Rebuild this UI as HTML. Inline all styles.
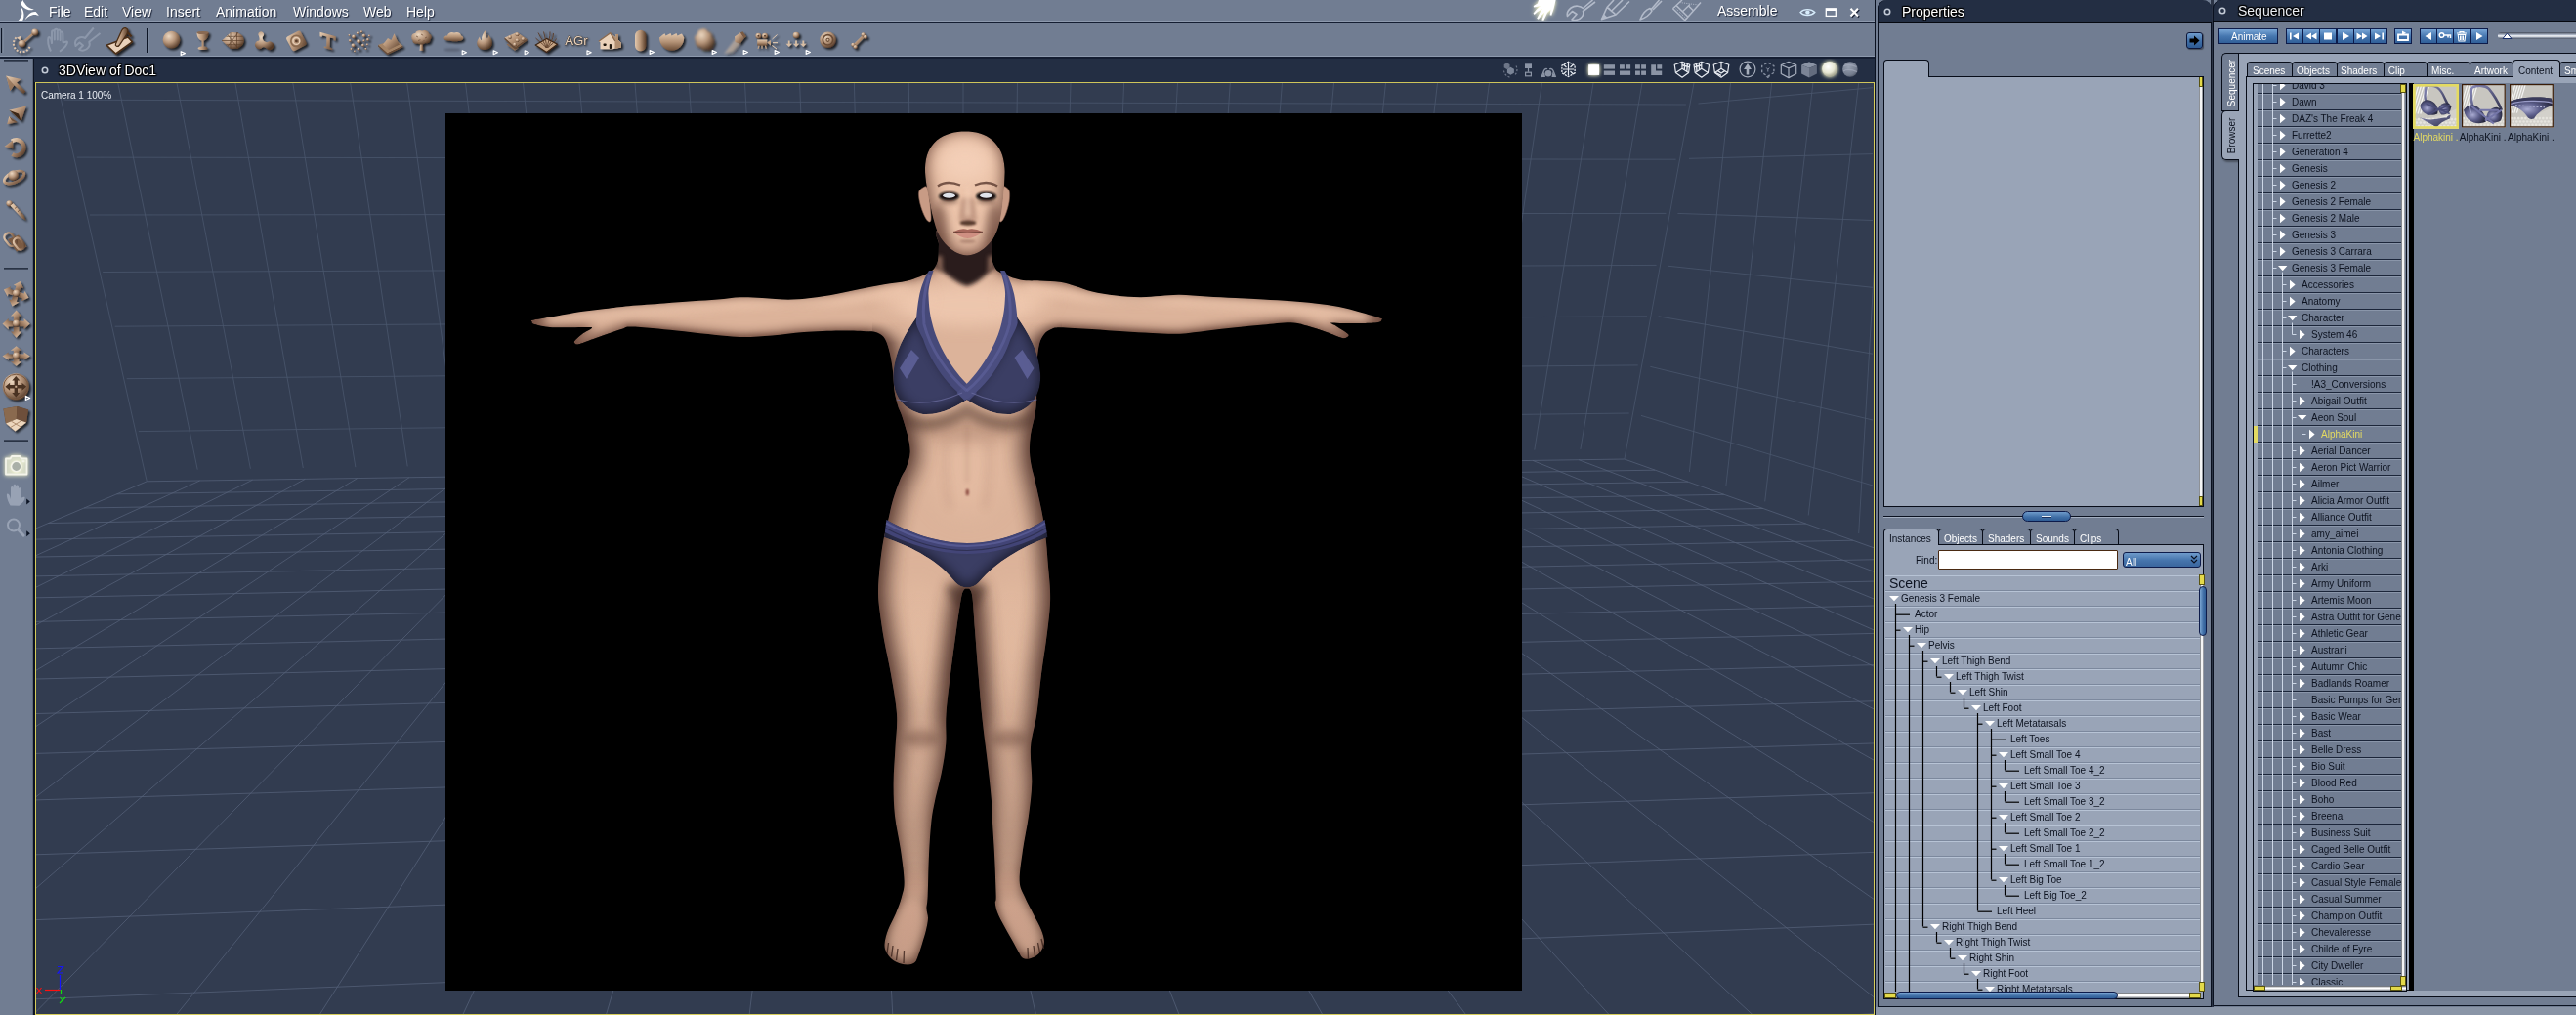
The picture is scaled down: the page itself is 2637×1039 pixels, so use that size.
<!DOCTYPE html><html><head><meta charset="utf-8"><title>Carrara</title><style>
*{box-sizing:border-box;margin:0;padding:0}
html,body{width:2637px;height:1039px;overflow:hidden;background:#717d92;font-family:"Liberation Sans",sans-serif;}
#root{will-change:transform;position:relative;width:2637px;height:1039px;overflow:hidden;background:#717d92}
.abs{position:absolute}
.t{position:absolute;white-space:nowrap;line-height:1}
.menu{font-size:14px;color:#fff;text-shadow:1px 1px 1px #1a2236}
.title{font-size:14px;color:#fff;text-shadow:0 0 2px #000,1px 1px 1px #000,-1px -1px 1px #000,1px -1px 1px #000,-1px 1px 1px #000}
.tr{font-size:10px;color:#0d1320}
.tab{position:absolute;font-size:10px;color:#fff;white-space:nowrap;line-height:1}
</style></head><body><div id="root"><div class="abs" style="left:1919px;top:1031px;width:718px;height:8px;background:#8a95a7"></div><div class="abs" style="left:2263px;top:0;width:3px;height:1031px;background:#2b3446"></div><div class="abs" style="left:0;top:22px;width:1919px;height:1px;background:#8d99ad"></div><div class="abs" style="left:0;top:23px;width:1919px;height:1px;background:#141d31"></div><div class="t menu" style="left:50px;top:5px">File</div><div class="t menu" style="left:86px;top:5px">Edit</div><div class="t menu" style="left:125px;top:5px">View</div><div class="t menu" style="left:170px;top:5px">Insert</div><div class="t menu" style="left:221px;top:5px">Animation</div><div class="t menu" style="left:300px;top:5px">Windows</div><div class="t menu" style="left:372px;top:5px">Web</div><div class="t menu" style="left:416px;top:5px">Help</div><div class="abs" style="left:0;top:57px;width:1919px;height:1px;background:#8d99ad"></div><div class="abs" style="left:0;top:58px;width:1919px;height:2px;background:#141d31"></div><div class="t menu" style="left:1758px;top:4px;font-size:14px">Assemble</div><svg class="abs" style="left:0;top:24px" width="920" height="34" viewBox="0 24 920 34"><defs>
<linearGradient id="bz" x1="0" y1="0" x2="1" y2="1"><stop offset="0" stop-color="#e6ceb4"/><stop offset=".45" stop-color="#b59377"/><stop offset="1" stop-color="#5a3f2c"/></linearGradient>
<linearGradient id="bzv" x1="0" y1="0" x2="0" y2="1"><stop offset="0" stop-color="#e2c8ae"/><stop offset=".5" stop-color="#b39276"/><stop offset="1" stop-color="#6a4c36"/></linearGradient>
<linearGradient id="bzh" x1="0" y1="0" x2="1" y2="0"><stop offset="0" stop-color="#e2c8ae"/><stop offset=".45" stop-color="#b99779"/><stop offset="1" stop-color="#553a28"/></linearGradient>
<radialGradient id="bzr" cx=".35" cy=".3" r=".75"><stop offset="0" stop-color="#ecd8c2"/><stop offset=".5" stop-color="#b6957a"/><stop offset="1" stop-color="#523826"/></radialGradient>
<filter id="ds" x="-30%" y="-30%" width="170%" height="170%"><feGaussianBlur in="SourceAlpha" stdDeviation="1"/><feOffset dx="1.6" dy="1.8"/><feComponentTransfer><feFuncA type="linear" slope=".75"/></feComponentTransfer><feMerge><feMergeNode/><feMergeNode in="SourceGraphic"/></feMerge></filter>
<filter id="sb" x="-50%" y="-50%" width="200%" height="200%"><feGaussianBlur stdDeviation="0.8"/></filter>
</defs><rect x="1" y="29" width="1.4" height="25" fill="#0c1424"/><rect x="2.4" y="29" width="1" height="25" fill="#8b96aa"/><rect x="150" y="29" width="1.4" height="25" fill="#0c1424"/><rect x="151.4" y="29" width="1" height="25" fill="#8b96aa"/><g filter="url(#ds)"><path d="M22.5 44.6L35.7 32.9" stroke="url(#bz)" stroke-width="2.6" stroke-linecap="round"/><circle cx="22.5" cy="44.6" r="3.7" fill="url(#bzr)"/><circle cx="35.7" cy="32.9" r="3.4" fill="url(#bzr)"/><rect x="15.0" y="38.2" width="1.9" height="1.9" fill="#e2c6aa" transform="rotate(-140 15.9 39.1)"/><rect x="13.3" y="41.3" width="1.9" height="1.9" fill="#e2c6aa" transform="rotate(-164 14.2 42.2)"/><rect x="13.1" y="44.9" width="1.9" height="1.9" fill="#e2c6aa" transform="rotate(-188 14.0 45.8)"/><rect x="14.3" y="48.3" width="1.9" height="1.9" fill="#e2c6aa" transform="rotate(-212 15.2 49.2)"/><rect x="16.8" y="50.8" width="1.9" height="1.9" fill="#e2c6aa" transform="rotate(-236 17.7 51.7)"/><rect x="20.1" y="52.2" width="1.9" height="1.9" fill="#e2c6aa" transform="rotate(-260 21.0 53.1)"/><rect x="23.7" y="52.0" width="1.9" height="1.9" fill="#e2c6aa" transform="rotate(-284 24.6 52.9)"/><rect x="26.9" y="50.5" width="1.9" height="1.9" fill="#e2c6aa" transform="rotate(-308 27.8 51.4)"/><rect x="29.2" y="47.7" width="1.9" height="1.9" fill="#e2c6aa" transform="rotate(-332 30.1 48.6)"/><path d="M17 38.5l4.5-1.8l-1 4.6z" fill="#e2c6aa"/><path d="M109 46.2L131 38L135.3 42.8L118.6 55Z" fill="#ead2ba" stroke="#4a2e18" stroke-width="1.6" stroke-linejoin="round"/><path d="M128.5 28.6C131.5 29.4 131.6 32.5 129.5 35.5L122 46.5C120.5 48.3 117.6 47.2 118.5 44.8L124 32.5C125 30 126.8 28.3 128.5 28.6Z" fill="url(#bzh)" stroke="#4a2e18" stroke-width="1.3"/><path d="M131 33.5L134.5 37.5" stroke="#4a2e18" stroke-width="2.2"/><circle cx="175.5" cy="40.7" r="8.9" fill="url(#bzr)"/><path d="M201.5 33.5C201.5 38 204 41 206.6 41.6L206.6 47.6C204 47.8 202.6 48.6 202.6 49.5C202.6 50.6 205 51 207.6 51C210.2 51 212.6 50.6 212.6 49.5C212.6 48.6 211.2 47.8 208.6 47.6L208.6 41.6C211.2 41 213.7 38 213.7 33.5Z" fill="url(#bzh)"/><ellipse cx="207.6" cy="33.5" rx="6.1" ry="1.6" fill="#8a6a52"/><path d="M227 41.5L236 33.2C243 32 249.8 35.5 249.8 41.5C249.8 47.5 243 51 236 49.8Z" fill="url(#bzr)"/><path d="M227 41.5H249.8M231.5 37.3H248.5M231.5 45.7H248.5M236 33.2V49.8M242.5 33V50M233 35.5L244 50M233 47.5L244 33" stroke="#5a3e2a" stroke-width=".8" fill="none" opacity=".85"/><path d="M264.3 35.2a2.9 2.9 0 1 1 4.6 2.4C268 40 270 43 273.5 43.2a4.3 4.3 0 1 1 -0.6 6.6C271 48.5 270 48 268.8 48.6a4.4 4.4 0 1 1 -3.6 -7.2C266 40 265.5 38 264.3 35.2Z" fill="url(#bzr)"/><g transform="rotate(-28 303.4 41.9)"><rect x="295.2" y="33.7" width="16.4" height="16.4" rx="2.5" fill="url(#bz)"/></g><circle cx="303.4" cy="41.9" r="5.6" fill="none" stroke="#8a6a50" stroke-width="1.6"/><circle cx="303.4" cy="41.9" r="3.4" fill="none" stroke="#e6cdb4" stroke-width="1.5"/><circle cx="303.4" cy="41.9" r="1.4" fill="#5a3e2a"/><path d="M327.5 32.8L343.8 37.2L343.6 41.5L341.8 41.3L341.4 39.3L337.8 38.4L337.6 48.6L340.2 49.6L340.2 51.2L331.8 49L331.8 47.4L334.2 47.8L334.4 37.4L330 36.2L329.4 37.8L327.5 37.3Z" fill="url(#bz)"/><circle cx="367.2" cy="42.3" r="2.1" fill="url(#bzr)"/><circle cx="362" cy="37.5" r="1.9" fill="url(#bzr)"/><circle cx="372.5" cy="36.5" r="1.8" fill="url(#bzr)"/><circle cx="361.5" cy="46.5" r="1.9" fill="url(#bzr)"/><circle cx="371.5" cy="46.2" r="1.5" fill="url(#bzr)"/><circle cx="366" cy="33.8" r="1.3" fill="url(#bzr)"/><circle cx="376.5" cy="40.5" r="1.4" fill="url(#bzr)"/><circle cx="358.3" cy="41.5" r="1.4" fill="url(#bzr)"/><circle cx="367" cy="50.2" r="1.4" fill="url(#bzr)"/><circle cx="374.5" cy="50" r="1.1" fill="url(#bzr)"/><circle cx="359.5" cy="50.2" r="1.1" fill="url(#bzr)"/><circle cx="370" cy="32.5" r="1.2" fill="url(#bzr)"/><circle cx="376" cy="45.5" r="1.1" fill="url(#bzr)"/><circle cx="363" cy="52.5" r="1" fill="url(#bzr)"/><circle cx="378" cy="36.5" r="1.1" fill="url(#bzr)"/><circle cx="357.5" cy="36" r="1.1" fill="url(#bzr)"/><circle cx="372.5" cy="41.5" r="1.2" fill="url(#bzr)"/><path d="M387 46L404 40L412.3 47L396.5 54.4Z" fill="#a58466"/><path d="M392 45.5L397 39L400.5 41L403.5 34.3L406 40L409 45.5L398 51Z" fill="url(#bz)"/><path d="M387 46L396.5 54.4L412.3 47L412.3 48.5L396.5 56L387 47.5Z" fill="#6a4c36"/><path d="M430.2 44H432.8L433.3 51.7H429.6Z" fill="url(#bzh)"/><path d="M421.5 38.5C420.5 35 424 33.8 425.2 34C426 31 430 30.6 432 31.6C435 30 439 32 439.2 34.6C442 35.5 442.5 39 440.5 40.6C441 43.5 437.5 45 435.5 44C433.5 46 429.5 46 427.8 44.5C425 45.6 421.8 43.5 422.5 41C421.2 40.3 421 39.3 421.5 38.5Z" fill="url(#bzr)"/><path d="M426 37l2 1M431 35l2.2 1.2M435 39l2-1M428 41.5l2.4-.8M433 42.5l1.5-1.5" stroke="#6e4f3a" stroke-width=".9" opacity=".8"/><path d="M455 40.5C453.5 38 456 36 458 36.5C458.5 33.5 462.5 32 465 33.6C468 31.8 472 33.8 472 36.5C474.5 37 475 40 473 41C472 42.6 458 42.8 455 40.5Z" fill="url(#bzv)"/><path d="M496.5 31.2C499.5 35 497 37.5 499 39.5C500 38 500.2 36.8 499.8 35.5C503 38.5 504.5 42.5 503.5 46C502.5 49.5 499 51 496 51C492 51 488.5 48.5 488.2 44.5C488 41.5 489.8 39.5 491 37.5C491.2 39.5 491.8 40.5 493 41.3C492.6 37.5 494.5 34 496.5 31.2Z" fill="url(#bzr)"/><path d="M516.5 38.5L529 33L539.5 40L527.5 48.5Z" fill="url(#bz)"/><path d="M516.5 38.5L527.5 48.5L539.5 40V41.6L527.5 50.4L516.5 40.2Z" fill="#6a4c36"/><path d="M518.5 45.5L527 51.8L531 49L527.5 50.4L520 44.5Z" fill="#8a6a50"/><circle cx="522" cy="38" r="1.9" fill="url(#bzr)"/><circle cx="529.5" cy="35.2" r="1.9" fill="url(#bzr)"/><circle cx="535.5" cy="39.8" r="1.9" fill="url(#bzr)"/><circle cx="529.5" cy="41.2" r="1.9" fill="url(#bzr)"/><circle cx="527" cy="45.5" r="1.9" fill="url(#bzr)"/><path d="M548.2 46L559.5 39.4L570.6 45.2L559.5 53.4Z" fill="#c4a384" stroke="#3a2414" stroke-width="1.2" stroke-linejoin="round"/><path d="M559 49C558 44 554 40 551 33.5M559.5 49C559.5 43 557.5 37 556.5 32.5M560 49C561 43 563.5 38 563 32.5M560.5 49C562.5 44.5 566.5 40 566.5 34M559 48.5C556 45 552 42.5 548.5 39M561 48.5C564 45.5 568 43.5 569.5 39.5" stroke="#5a3c28" stroke-width=".9" fill="none"/><path d="M612.8 42.2L624.8 33.8L630.5 38.5L630.5 35L633 35L633 41L635.8 43.8L635.8 48.5L627 50.3L614.5 50.3L614.5 43.2Z" fill="#ead2ba"/><path d="M624.8 33.8L630.5 38.5V35H633V41L635.8 43.8V48.5L629.5 50L629.5 42Z" fill="#b08e70"/><path d="M612.8 42.2L624.8 33.8L629.8 42" stroke="#8a6a50" stroke-width="1.3" fill="none"/><rect x="617.5" y="44.5" width="3.2" height="2.4" rx=".8" fill="#1c120a"/><rect x="623.8" y="45" width="2.2" height="5" rx=".8" fill="#1c120a"/><rect x="650" y="30.8" width="11.4" height="21.5" rx="5.7" fill="url(#bzh)"/><path d="M675 38.5L678.5 35.5L680.5 34.2L681.5 36.6L684.5 35L686.5 34L687.5 36.6L690.5 35L692.5 34L693.5 36.6L696.5 35L698 34.5L700.2 38.5C700.2 46 694.5 51.8 687.6 51.8C680.7 51.8 675 46 675 38.5Z" fill="url(#bzv)"/><path d="M719 29.5C722 28.8 724 30.5 724.5 32.5C727.5 32.5 729.5 35.5 728.5 38C731.5 40 732 44.5 729.5 46.5C729.5 50 725.5 52.2 722.5 50.5C720.5 51.5 718 50.5 717.5 48.2C713.5 48.5 711 45 712.5 42C710.3 40 710.8 36 713.8 35C713.5 32 716 29.8 719 29.5Z" fill="url(#bzr)" filter="url(#sb)"/><path d="M752.5 40L741 55L750 53L757.5 44.5Z" fill="#d8bea4" opacity=".55" filter="url(#sb)"/><path d="M752 37.5L757.8 33.3L762 39L757.8 44.5L752.5 43Z" fill="url(#bz)"/><path d="M757.8 33.3L760.5 32.3L764 37.5L762 39Z" fill="#7a5a42"/><circle cx="776.4" cy="36.8" r="3" fill="url(#bzr)"/><circle cx="783" cy="36.8" r="3" fill="url(#bzr)"/><circle cx="776.4" cy="36.8" r="1" fill="#5a3e2a"/><circle cx="783" cy="36.8" r="1" fill="#5a3e2a"/><rect x="775.2" y="40.6" width="10" height="6" fill="url(#bzv)"/><path d="M785.2 43.6L789 41V46.4Z" fill="#c4a384"/><path d="M777 46.6L776 49.8M780 46.6V49.8M783.4 46.6L784.4 49.8" stroke="#c4a384" stroke-width="1.1"/><path d="M790.5 40L795.5 35.5M791 43.6H796M790.5 46.6L795 50" stroke="#e2c8ae" stroke-width="1"/><circle cx="815" cy="36" r="3.3" fill="url(#bzr)"/><path d="M806.8000000000001 41.5h1.8v3.2h2.2l-3.1 3.4l-3.1-3.4h2.2z" fill="#d8bea4"/><path d="M814.1 41.5h1.8v3.2h2.2l-3.1 3.4l-3.1-3.4h2.2z" fill="#d8bea4"/><path d="M821.4 41.5h1.8v3.2h2.2l-3.1 3.4l-3.1-3.4h2.2z" fill="#d8bea4"/><circle cx="847.5" cy="40.8" r="8.3" fill="url(#bzr)"/><circle cx="847.5" cy="40.8" r="5.2" fill="none" stroke="#6a4c36" stroke-width="1.7"/><circle cx="847.5" cy="40.8" r="2.1" fill="#6a4c36"/><circle cx="847.5" cy="40.8" r="1" fill="#d8bea4"/><path d="M875 46.2L884 37" stroke="url(#bz)" stroke-width="3.2"/><circle cx="873.3" cy="45.8" r="2.1" fill="url(#bzr)"/><circle cx="875.6" cy="48" r="2.1" fill="url(#bzr)"/><circle cx="883.6" cy="35.4" r="2.1" fill="url(#bzr)"/><circle cx="885.9" cy="37.8" r="2.1" fill="url(#bzr)"/></g><ellipse cx="463" cy="51" rx="8.5" ry="1.6" fill="#4a4f5e" opacity=".6" filter="url(#sb)"/><path d="M52 52.5C49.5 47 48.5 42 49.5 38.5C50.5 37.5 52 38.5 52.5 41L53 44V33C53 30.8 55.8 30.8 55.8 33V40.5V31.5C55.8 29.3 58.8 29.3 58.8 31.5V40.5V32C58.8 30 61.6 30 61.6 32V41V34C61.6 32 64.3 32 64.3 34L64.5 43C66.5 44 68.5 41.5 69 43C69 46.5 65.5 49.5 61 52.7" fill="none" stroke="#8c97aa" stroke-width="2" stroke-linejoin="round"/><path d="M95.8 28.5L87 39C84 37 79.5 38 77.5 41.5C76.5 43.5 76.8 45.5 77.5 47L81.5 43.5L85 46.5L81 50.5C83.5 52.5 88 52 90.5 48.5C92 46.5 92 44.5 91.3 42.8L102.5 34" fill="none" stroke="#8c97aa" stroke-width="2" stroke-linejoin="round"/><text x="578.3" y="45.6" font-family="Liberation Sans, sans-serif" font-size="13.2" fill="#e9d2ba" stroke="#3a2616" stroke-width=".5" paint-order="stroke" style="filter:drop-shadow(1.2px 1.4px 1px rgba(0,0,0,.7))">AGr</text><path d="M185.2 52.699999999999996l4.2 1.9l-4.2 1.9z" fill="#71798c" stroke="#fff" stroke-width="1.2" stroke-linejoin="round"/><path d="M473.2 51.9l4.2 1.9l-4.2 1.9z" fill="#71798c" stroke="#fff" stroke-width="1.2" stroke-linejoin="round"/><path d="M505.2 51.9l4.2 1.9l-4.2 1.9z" fill="#71798c" stroke="#fff" stroke-width="1.2" stroke-linejoin="round"/><path d="M537.2 51.9l4.2 1.9l-4.2 1.9z" fill="#71798c" stroke="#fff" stroke-width="1.2" stroke-linejoin="round"/><path d="M601 51.9l4.2 1.9l-4.2 1.9z" fill="#71798c" stroke="#fff" stroke-width="1.2" stroke-linejoin="round"/><path d="M665.2 51.6l4.2 1.9l-4.2 1.9z" fill="#71798c" stroke="#fff" stroke-width="1.2" stroke-linejoin="round"/><path d="M729.2 51.6l4.2 1.9l-4.2 1.9z" fill="#71798c" stroke="#fff" stroke-width="1.2" stroke-linejoin="round"/><path d="M761.2 51.6l4.2 1.9l-4.2 1.9z" fill="#71798c" stroke="#fff" stroke-width="1.2" stroke-linejoin="round"/><path d="M793.2 51.6l4.2 1.9l-4.2 1.9z" fill="#71798c" stroke="#fff" stroke-width="1.2" stroke-linejoin="round"/><path d="M825.2 51.6l4.2 1.9l-4.2 1.9z" fill="#71798c" stroke="#fff" stroke-width="1.2" stroke-linejoin="round"/></svg><div class="abs" style="left:33px;top:60px;width:1px;height:979px;background:#5b6679"></div><div class="abs" style="left:34px;top:60px;width:2px;height:979px;background:#0c1322"></div><div class="abs" style="left:35px;top:60px;width:1884px;height:24px;background:#232e43"></div><div class="t title" style="left:60px;top:65px">3DView of Doc1</div><div class="abs" style="left:36px;top:84px;width:1883px;height:955px;background:#323c50;border:1px solid #d6cc5a;border-top-color:#cfc55a"></div><div id="vp" class="abs" style="left:37px;top:85px;width:1881px;height:953px;overflow:hidden"><svg width="1881" height="953" viewBox="37 85 1881 953" style="position:absolute;left:0;top:0" fill="none" stroke-width="1"><path d="M150.3 492.8L-4307.7 2380.8M204.6 492.0L-3839.7 2339.6M258.6 491.2L-3389.0 2299.9M312.3 490.4L-2954.6 2261.6M365.8 489.6L-2535.6 2224.7M418.9 488.8L-2131.3 2189.1M471.8 488.0L-1740.8 2154.7M524.4 487.2L-1363.5 2121.5M576.8 486.4L-998.7 2089.4M628.8 485.6L-645.8 2058.3M680.6 484.8L-304.2 2028.2M732.1 484.0L26.6 1999.1M783.4 483.3L347.1 1970.9M834.4 482.5L657.7 1943.5M885.1 481.7L959.0 1917.0M935.6 481.0L1251.4 1891.2M985.8 480.2L1535.1 1866.2M1035.8 479.5L1810.7 1842.0M1085.5 478.7L2078.5 1818.4M1134.9 478.0L2338.7 1795.5M1184.2 477.2L2591.7 1773.2M1233.1 476.5L2837.9 1751.5M1281.8 475.8L3077.4 1730.4M1330.3 475.0L3310.5 1709.9M1378.5 474.3L3537.6 1689.9M1426.5 473.6L3758.7 1670.4M1474.3 472.9L3974.2 1651.4M1521.8 472.1L4184.3 1632.9M1569.0 471.4L4389.2 1614.9M1616.1 470.7L4589.0 1597.3M1662.9 470.0L4783.9 1580.1M150.3 492.8L1662.9 470.0M119.5 505.8L1694.2 481.2M86.0 520.0L1728.1 493.2M49.4 535.5L1764.8 506.3M9.1 552.6L1804.9 520.5M-35.3 571.4L1848.7 536.1M-84.5 592.2L1896.9 553.2M-139.4 615.5L1950.0 572.1M-201.0 641.6L2008.9 593.1M-270.6 671.0L2074.6 616.4M-349.8 704.6L2148.3 642.7M-440.9 743.2L2231.7 672.3M-546.7 788.0L2326.6 706.1M-671.1 840.7L2435.9 745.0M-819.4 903.5L2562.8 790.1M-999.4 979.7L2712.2 843.2M-1222.2 1074.0L2890.4 906.6M-1505.2 1193.9L3106.8 983.6M-1876.9 1351.4L3375.2 1079.1M-2386.6 1567.2L3716.7 1200.5M-3128.3 1881.3L4166.1 1360.4M-4307.7 2380.8L4783.9 1580.1" stroke="#55617a" opacity=".75"/><path d="M58.7 85L150.3 492.8M120.8 85L202.2 480.6M181.0 85L256.4 479.8M240.9 85L310.3 479.0M299.8 85L363.9 478.2M358.7 85L417.2 477.4M416.7 85L470.3 476.7M476.5 85L523.1 475.9M535.5 85L575.6 475.1M593.0 85L627.8 474.4M650.0 85L679.8 473.6M705.3 85L731.4 472.9M762.5 85L782.8 472.1M818.6 85L833.9 471.4M874.4 85L884.8 470.6M930.3 85L935.4 469.9M986.0 85L985.8 469.2M1041.5 85L1035.9 468.4M1096.0 85L1085.8 467.7M1150.6 85L1135.4 467.0M1205.5 85L1184.7 466.2M1259.3 85L1233.8 465.5M1312.5 85L1282.7 464.8M1365.5 85L1331.3 464.1M1418.5 85L1379.6 463.4M1471.5 85L1427.8 462.7M1524.5 85L1475.7 462.0M1578.5 85L1523.4 461.3M1631.0 85L1570.8 460.6M1681.0 85L1617.9 459.9M1734.0 85L1662.9 470.0M65.6 102.2L1725.9 107M78.8 161.1L1715.6 163.2M92.0 220L1705.4 218.4M105.2 278.5L1695.6 271.4M117.7 334.2L1686.0 323.8M129.7 387.7L1676.7 373.9M141.8 441.6L1667.7 423" stroke="#4a566d" opacity=".8"/><path d="M1771.6 85L1729.4 483M1813.7 85L1766.9 497M1855.9 85L1806.7 513.4M1902.7 85L1851.2 527.5M1920 249L1902.7 546M1738.5 106L1917 89.7M1729 162.3L1917 157.6M1717.4 218.4L1917 225.5M1708 272.3L1917 294.3M1697.7 323.8L1917 362.2M1689.3 375.3L1917 430M1680 425.4L1917 497" stroke="#4a566d" opacity=".8"/><path d="M61.5 998V1013.5" stroke="#1414ff" stroke-width="1.2"/><path d="M46 1013.5H61.5" stroke="#ff1010" stroke-width="1.2"/><path d="M62.5 1013V1018" stroke="#10e010" stroke-width="1.2"/><path d="M59 989.5H64.5L59 996H65" stroke="#1414ff" stroke-width="1.1"/><path d="M37.5 1011L42.5 1017M42.5 1011L37.5 1017" stroke="#ff1010" stroke-width="1.1"/><path d="M61.5 1021L64 1024L67 1021M64 1024L61 1027" stroke="#10e010" stroke-width="1.1"/></svg></div><div class="abs" style="left:456px;top:116px;width:1102px;height:898px;background:#000;overflow:hidden"><svg width="1102" height="898" viewBox="456 116 1102 898" style="position:absolute;left:0;top:0" fill="#c99c84"><defs><filter id="fBody" x="-2%" y="-2%" width="104%" height="104%" color-interpolation-filters="sRGB"><feMorphology in="SourceAlpha" operator="erode" radius="1" result="e"/><feGaussianBlur in="e" stdDeviation="6" result="b0"/><feOffset in="b0" dx="0" dy="-1.5" result="b"/><feFlood flood-color="#dcb39a"/><feComposite operator="in" in2="b" result="l"/><feFlood flood-color="#6a463a"/><feComposite operator="in" in2="SourceAlpha" result="d"/><feMerge result="m"><feMergeNode in="d"/><feMergeNode in="l"/></feMerge><feComposite in="m" in2="SourceAlpha" operator="in"/></filter><filter id="fHead" x="-2%" y="-2%" width="104%" height="104%" color-interpolation-filters="sRGB"><feMorphology in="SourceAlpha" operator="erode" radius="2" result="e"/><feGaussianBlur in="e" stdDeviation="8" result="b0"/><feOffset in="b0" dx="0" dy="-3" result="b"/><feFlood flood-color="#ecc4aa"/><feComposite operator="in" in2="b" result="l"/><feFlood flood-color="#7a5446"/><feComposite operator="in" in2="SourceAlpha" result="d"/><feMerge result="m"><feMergeNode in="d"/><feMergeNode in="l"/></feMerge><feComposite in="m" in2="SourceAlpha" operator="in"/></filter><filter id="fBik" x="-2%" y="-2%" width="104%" height="104%" color-interpolation-filters="sRGB"><feMorphology in="SourceAlpha" operator="erode" radius="2" result="e"/><feGaussianBlur in="e" stdDeviation="6" result="b0"/><feOffset in="b0" dx="0" dy="-1" result="b"/><feFlood flood-color="#3b3e64"/><feComposite operator="in" in2="b" result="l"/><feFlood flood-color="#1d1e31"/><feComposite operator="in" in2="SourceAlpha" result="d"/><feMerge result="m"><feMergeNode in="d"/><feMergeNode in="l"/></feMerge><feComposite in="m" in2="SourceAlpha" operator="in"/></filter><filter id="bl1" filterUnits="userSpaceOnUse" x="456" y="116" width="1102" height="898"><feGaussianBlur stdDeviation="0.8"/></filter><filter id="bl2" filterUnits="userSpaceOnUse" x="456" y="116" width="1102" height="898"><feGaussianBlur stdDeviation="2"/></filter><filter id="bl4" filterUnits="userSpaceOnUse" x="456" y="116" width="1102" height="898"><feGaussianBlur stdDeviation="4"/></filter><filter id="bl8" filterUnits="userSpaceOnUse" x="456" y="116" width="1102" height="898"><feGaussianBlur stdDeviation="8"/></filter><filter id="bl14" filterUnits="userSpaceOnUse" x="456" y="116" width="1102" height="898"><feGaussianBlur stdDeviation="14"/></filter><clipPath id="cBody"><path d="M962.0 234.0C953.2 236.7 961.2 245.0 961.0 250.0C960.8 255.0 961.0 260.3 960.5 264.0C960.0 267.7 959.6 269.5 958.0 272.0C956.4 274.5 955.8 276.4 951.0 279.0C946.2 281.6 936.7 285.5 929.0 287.5C921.3 289.5 913.2 289.8 905.0 291.2C896.8 292.6 888.2 294.4 880.0 296.0C871.8 297.6 864.3 299.5 856.0 301.0C847.7 302.5 838.2 304.1 830.0 305.0C821.8 305.9 815.3 306.7 807.0 306.7C798.7 306.7 788.2 305.4 780.0 305.0C771.8 304.6 765.5 303.9 758.0 304.2C750.5 304.4 743.2 305.8 735.0 306.5C726.8 307.2 718.2 307.6 709.0 308.3C699.8 309.0 690.8 309.7 680.0 310.5C669.2 311.3 654.0 312.3 644.0 313.2C634.0 314.1 628.2 315.0 620.0 316.0C611.8 317.0 603.3 317.8 595.0 319.0C586.7 320.2 578.1 322.1 570.0 323.5C561.9 324.9 550.5 326.5 546.3 327.5C542.0 328.5 544.4 328.8 544.5 329.5C544.6 330.2 543.9 331.1 547.0 332.0C550.1 332.9 556.7 334.5 563.0 335.0C569.3 335.5 578.8 335.2 585.0 335.2C591.2 335.2 596.5 334.9 600.0 335.0C603.5 335.1 606.7 334.6 606.0 335.8C605.3 337.0 599.0 339.8 596.0 342.0C593.0 344.2 589.4 347.3 588.2 349.0C587.0 350.7 588.1 351.5 589.0 352.0C589.9 352.5 590.1 353.0 593.6 352.0C597.1 351.0 602.9 348.5 610.0 346.0C617.1 343.5 630.3 338.9 636.0 337.0C641.7 335.1 638.7 334.6 644.0 334.4C649.3 334.2 659.8 335.3 668.0 336.0C676.2 336.7 683.5 337.5 693.0 338.5C702.5 339.5 714.2 340.9 725.0 342.0C735.8 343.1 747.2 344.8 758.0 345.0C768.8 345.2 779.2 344.3 790.0 343.5C800.8 342.7 811.3 340.8 823.0 340.0C834.7 339.2 849.0 338.6 860.0 338.5C871.0 338.4 882.5 338.9 889.0 339.3C895.5 339.7 896.2 339.7 899.0 341.0C901.8 342.3 904.0 343.5 906.0 347.0C908.0 350.5 909.7 356.5 911.0 362.0C912.3 367.5 913.2 373.7 914.0 380.0C914.8 386.3 914.7 394.2 915.5 400.0C916.3 405.8 917.8 410.8 919.0 415.0C920.2 419.2 921.3 420.0 923.0 425.0C924.7 430.0 927.5 438.7 929.0 445.0C930.5 451.3 931.9 457.5 931.7 463.0C931.5 468.5 929.7 473.3 928.0 478.0C926.3 482.7 923.7 485.3 921.4 491.0C919.1 496.7 916.0 505.2 914.0 512.0C912.0 518.8 911.0 524.8 909.3 532.0C907.6 539.2 905.4 547.0 904.0 555.0C902.6 563.0 901.5 571.7 900.7 580.0C899.9 588.3 899.0 597.5 899.0 605.0C899.0 612.5 899.5 616.7 900.5 625.0C901.5 633.3 903.1 644.2 905.0 655.0C906.9 665.8 909.8 677.3 912.0 690.0C914.2 702.7 917.2 718.5 918.0 731.0C918.8 743.5 917.1 753.3 916.5 765.0C915.9 776.7 914.7 789.3 914.6 801.0C914.5 812.7 914.8 823.5 916.0 835.0C917.2 846.5 920.4 858.8 922.0 870.0C923.6 881.2 925.4 894.0 925.6 902.0C925.8 910.0 924.4 912.5 923.0 918.0C921.6 923.5 919.3 929.3 917.0 935.0C914.7 940.7 910.9 946.8 909.0 952.0C907.1 957.2 905.8 962.3 905.5 966.0C905.2 969.7 905.8 971.3 907.0 974.0C908.2 976.7 910.5 979.9 913.0 982.0C915.5 984.1 919.2 985.6 922.0 986.5C924.8 987.4 927.5 987.8 930.0 987.5C932.5 987.2 935.0 986.6 936.7 985.0C938.4 983.4 938.8 981.2 940.0 978.0C941.2 974.8 942.7 970.3 944.0 966.0C945.3 961.7 947.0 956.3 948.0 952.0C949.0 947.7 949.9 943.7 950.0 940.0C950.1 936.3 948.5 933.8 948.5 930.0C948.5 926.2 949.3 926.2 949.7 917.0C950.1 907.8 950.4 887.5 951.0 875.0C951.6 862.5 952.3 851.2 953.3 842.0C954.3 832.8 955.2 828.7 957.0 820.0C958.8 811.3 962.1 799.8 964.0 790.0C965.9 780.2 967.5 770.8 968.3 761.0C969.0 751.2 967.7 742.8 968.5 731.0C969.3 719.2 971.2 704.3 973.0 690.0C974.8 675.7 977.2 658.0 979.0 645.0C980.8 632.0 982.7 618.9 984.0 612.0C985.3 605.1 986.0 605.1 987.0 603.5C988.0 601.9 989.0 602.5 990.0 602.5C991.0 602.5 992.1 601.9 993.0 603.5C993.9 605.1 994.7 605.1 995.5 612.0C996.3 618.9 997.0 632.0 998.0 645.0C999.0 658.0 1000.3 675.7 1001.5 690.0C1002.7 704.3 1003.8 719.2 1005.0 731.0C1006.2 742.8 1007.3 751.2 1008.5 761.0C1009.7 770.8 1010.9 780.2 1012.0 790.0C1013.1 799.8 1014.3 811.3 1015.0 820.0C1015.7 828.7 1015.5 832.8 1016.0 842.0C1016.5 851.2 1017.4 862.5 1018.0 875.0C1018.6 887.5 1019.5 908.8 1019.6 917.0C1019.7 925.2 1018.6 921.2 1018.8 924.0C1019.0 926.8 1019.5 930.0 1021.0 934.0C1022.5 938.0 1025.3 943.0 1028.0 948.0C1030.7 953.0 1034.5 959.5 1037.0 964.0C1039.5 968.5 1041.4 972.2 1043.0 975.0C1044.6 977.8 1045.0 979.4 1046.5 980.5C1048.0 981.6 1049.8 982.0 1052.0 981.8C1054.2 981.5 1057.7 980.5 1060.0 979.0C1062.3 977.5 1064.5 975.5 1066.0 973.0C1067.5 970.5 1069.0 967.5 1069.0 964.0C1069.0 960.5 1067.8 956.7 1066.0 952.0C1064.2 947.3 1060.8 941.7 1058.0 936.0C1055.2 930.3 1051.4 923.7 1049.0 918.0C1046.6 912.3 1044.0 910.0 1043.7 902.0C1043.4 894.0 1045.5 881.2 1047.0 870.0C1048.5 858.8 1051.5 846.5 1053.0 835.0C1054.5 823.5 1056.0 812.7 1056.3 801.0C1056.6 789.3 1054.2 776.7 1055.0 765.0C1055.8 753.3 1059.5 743.5 1061.3 731.0C1063.1 718.5 1064.4 702.7 1066.0 690.0C1067.6 677.3 1069.6 665.8 1071.0 655.0C1072.4 644.2 1073.8 633.3 1074.5 625.0C1075.2 616.7 1075.2 612.5 1075.0 605.0C1074.8 597.5 1073.7 588.3 1073.0 580.0C1072.3 571.7 1071.8 563.0 1071.0 555.0C1070.2 547.0 1069.2 539.2 1068.0 532.0C1066.8 524.8 1065.5 518.8 1064.0 512.0C1062.5 505.2 1060.6 496.7 1059.3 491.0C1058.0 485.3 1056.9 482.7 1056.0 478.0C1055.1 473.3 1054.2 468.5 1054.0 463.0C1053.8 457.5 1054.1 451.3 1055.0 445.0C1055.9 438.7 1058.3 430.8 1059.3 425.0C1060.3 419.2 1060.7 416.7 1061.0 410.0C1061.3 403.3 1060.9 391.7 1061.0 385.0C1061.1 378.3 1061.0 375.5 1061.5 370.0C1062.0 364.5 1062.8 356.7 1064.0 352.0C1065.2 347.3 1067.0 344.5 1069.0 342.0C1071.0 339.5 1073.3 338.1 1076.0 337.0C1078.7 335.9 1078.2 335.2 1085.2 335.2C1092.2 335.2 1107.1 336.3 1118.0 337.0C1128.9 337.7 1140.1 338.6 1150.4 339.3C1160.7 340.0 1170.5 340.6 1180.0 341.0C1189.5 341.4 1198.2 342.1 1207.5 341.7C1216.8 341.3 1226.5 339.6 1236.0 338.5C1245.5 337.4 1255.1 336.2 1264.6 335.2C1274.1 334.2 1283.5 333.3 1293.0 332.5C1302.5 331.7 1314.1 330.1 1321.6 330.3C1329.1 330.5 1331.9 332.0 1338.0 333.6C1344.1 335.2 1352.0 337.9 1358.0 340.0C1364.0 342.1 1370.3 345.2 1374.0 346.0C1377.7 346.8 1379.1 345.2 1380.0 344.5C1380.9 343.8 1381.5 343.2 1379.5 341.5C1377.5 339.8 1370.8 335.8 1368.0 334.0C1365.2 332.2 1361.2 331.1 1362.4 330.6C1363.6 330.1 1369.6 330.9 1375.0 331.0C1380.4 331.1 1389.0 331.2 1395.0 331.0C1401.0 330.8 1407.8 330.6 1411.0 330.0C1414.2 329.4 1414.2 328.2 1414.5 327.5C1414.8 326.8 1416.8 326.8 1413.0 325.5C1409.2 324.2 1399.1 321.4 1392.0 319.5C1384.9 317.6 1378.3 315.5 1370.6 314.0C1362.9 312.5 1354.2 311.4 1346.0 310.5C1337.8 309.6 1330.4 309.0 1321.6 308.3C1312.8 307.6 1302.5 307.1 1293.0 306.5C1283.5 305.9 1274.3 305.5 1264.6 305.0C1254.9 304.5 1244.5 304.0 1235.0 303.5C1225.5 303.0 1215.3 301.9 1207.5 301.8C1199.7 301.7 1194.8 302.6 1188.0 303.0C1181.2 303.4 1174.7 304.3 1167.0 304.2C1159.3 304.1 1150.2 303.4 1142.0 302.5C1133.8 301.6 1124.8 300.1 1118.0 298.5C1111.2 296.9 1106.5 294.6 1101.0 293.0C1095.5 291.4 1091.0 289.7 1085.0 288.8C1079.0 287.9 1071.8 287.9 1065.0 287.5C1058.2 287.1 1051.3 287.9 1044.5 286.5C1037.7 285.1 1028.5 281.4 1024.0 279.0C1019.5 276.6 1018.9 274.5 1017.5 272.0C1016.1 269.5 1015.9 267.7 1015.5 264.0C1015.1 260.3 1015.2 255.0 1015.0 250.0C1014.8 245.0 1022.8 236.7 1014.0 234.0C1005.2 231.3 970.8 231.3 962.0 234.0Z"/></clipPath><clipPath id="cHead"><path d="M988.0 134.5C993.0 134.5 998.3 135.0 1003.0 136.5C1007.7 138.0 1012.3 140.2 1016.0 143.5C1019.7 146.8 1022.9 151.2 1025.0 156.0C1027.1 160.8 1028.0 166.3 1028.5 172.0C1029.0 177.7 1028.3 184.0 1028.0 190.0C1027.7 196.0 1027.2 202.3 1026.5 208.0C1025.8 213.7 1025.2 218.7 1024.0 224.0C1022.8 229.3 1021.3 235.3 1019.0 240.0C1016.7 244.7 1013.2 248.8 1010.0 252.0C1006.8 255.2 1003.3 257.4 1000.0 259.0C996.7 260.6 993.3 261.5 990.0 261.5C986.7 261.5 983.3 260.6 980.0 259.0C976.7 257.4 973.2 255.2 970.0 252.0C966.8 248.8 963.4 244.7 961.0 240.0C958.6 235.3 957.0 229.3 955.5 224.0C954.0 218.7 953.2 213.7 952.0 208.0C950.8 202.3 949.3 196.0 948.5 190.0C947.7 184.0 946.8 177.7 947.0 172.0C947.2 166.3 948.0 160.8 950.0 156.0C952.0 151.2 955.2 146.8 959.0 143.5C962.8 140.2 968.2 138.0 973.0 136.5C977.8 135.0 983.0 134.5 988.0 134.5Z"/></clipPath><linearGradient id="legFade" x1="0" y1="0" x2="0" y2="1"><stop offset="0" stop-color="#3a241d" stop-opacity="0"/><stop offset=".45" stop-color="#3a241d" stop-opacity=".06"/><stop offset="1" stop-color="#3a241d" stop-opacity=".2"/></linearGradient></defs><g filter="url(#fBody)"><path d="M962.0 234.0C953.2 236.7 961.2 245.0 961.0 250.0C960.8 255.0 961.0 260.3 960.5 264.0C960.0 267.7 959.6 269.5 958.0 272.0C956.4 274.5 955.8 276.4 951.0 279.0C946.2 281.6 936.7 285.5 929.0 287.5C921.3 289.5 913.2 289.8 905.0 291.2C896.8 292.6 888.2 294.4 880.0 296.0C871.8 297.6 864.3 299.5 856.0 301.0C847.7 302.5 838.2 304.1 830.0 305.0C821.8 305.9 815.3 306.7 807.0 306.7C798.7 306.7 788.2 305.4 780.0 305.0C771.8 304.6 765.5 303.9 758.0 304.2C750.5 304.4 743.2 305.8 735.0 306.5C726.8 307.2 718.2 307.6 709.0 308.3C699.8 309.0 690.8 309.7 680.0 310.5C669.2 311.3 654.0 312.3 644.0 313.2C634.0 314.1 628.2 315.0 620.0 316.0C611.8 317.0 603.3 317.8 595.0 319.0C586.7 320.2 578.1 322.1 570.0 323.5C561.9 324.9 550.5 326.5 546.3 327.5C542.0 328.5 544.4 328.8 544.5 329.5C544.6 330.2 543.9 331.1 547.0 332.0C550.1 332.9 556.7 334.5 563.0 335.0C569.3 335.5 578.8 335.2 585.0 335.2C591.2 335.2 596.5 334.9 600.0 335.0C603.5 335.1 606.7 334.6 606.0 335.8C605.3 337.0 599.0 339.8 596.0 342.0C593.0 344.2 589.4 347.3 588.2 349.0C587.0 350.7 588.1 351.5 589.0 352.0C589.9 352.5 590.1 353.0 593.6 352.0C597.1 351.0 602.9 348.5 610.0 346.0C617.1 343.5 630.3 338.9 636.0 337.0C641.7 335.1 638.7 334.6 644.0 334.4C649.3 334.2 659.8 335.3 668.0 336.0C676.2 336.7 683.5 337.5 693.0 338.5C702.5 339.5 714.2 340.9 725.0 342.0C735.8 343.1 747.2 344.8 758.0 345.0C768.8 345.2 779.2 344.3 790.0 343.5C800.8 342.7 811.3 340.8 823.0 340.0C834.7 339.2 849.0 338.6 860.0 338.5C871.0 338.4 882.5 338.9 889.0 339.3C895.5 339.7 896.2 339.7 899.0 341.0C901.8 342.3 904.0 343.5 906.0 347.0C908.0 350.5 909.7 356.5 911.0 362.0C912.3 367.5 913.2 373.7 914.0 380.0C914.8 386.3 914.7 394.2 915.5 400.0C916.3 405.8 917.8 410.8 919.0 415.0C920.2 419.2 921.3 420.0 923.0 425.0C924.7 430.0 927.5 438.7 929.0 445.0C930.5 451.3 931.9 457.5 931.7 463.0C931.5 468.5 929.7 473.3 928.0 478.0C926.3 482.7 923.7 485.3 921.4 491.0C919.1 496.7 916.0 505.2 914.0 512.0C912.0 518.8 911.0 524.8 909.3 532.0C907.6 539.2 905.4 547.0 904.0 555.0C902.6 563.0 901.5 571.7 900.7 580.0C899.9 588.3 899.0 597.5 899.0 605.0C899.0 612.5 899.5 616.7 900.5 625.0C901.5 633.3 903.1 644.2 905.0 655.0C906.9 665.8 909.8 677.3 912.0 690.0C914.2 702.7 917.2 718.5 918.0 731.0C918.8 743.5 917.1 753.3 916.5 765.0C915.9 776.7 914.7 789.3 914.6 801.0C914.5 812.7 914.8 823.5 916.0 835.0C917.2 846.5 920.4 858.8 922.0 870.0C923.6 881.2 925.4 894.0 925.6 902.0C925.8 910.0 924.4 912.5 923.0 918.0C921.6 923.5 919.3 929.3 917.0 935.0C914.7 940.7 910.9 946.8 909.0 952.0C907.1 957.2 905.8 962.3 905.5 966.0C905.2 969.7 905.8 971.3 907.0 974.0C908.2 976.7 910.5 979.9 913.0 982.0C915.5 984.1 919.2 985.6 922.0 986.5C924.8 987.4 927.5 987.8 930.0 987.5C932.5 987.2 935.0 986.6 936.7 985.0C938.4 983.4 938.8 981.2 940.0 978.0C941.2 974.8 942.7 970.3 944.0 966.0C945.3 961.7 947.0 956.3 948.0 952.0C949.0 947.7 949.9 943.7 950.0 940.0C950.1 936.3 948.5 933.8 948.5 930.0C948.5 926.2 949.3 926.2 949.7 917.0C950.1 907.8 950.4 887.5 951.0 875.0C951.6 862.5 952.3 851.2 953.3 842.0C954.3 832.8 955.2 828.7 957.0 820.0C958.8 811.3 962.1 799.8 964.0 790.0C965.9 780.2 967.5 770.8 968.3 761.0C969.0 751.2 967.7 742.8 968.5 731.0C969.3 719.2 971.2 704.3 973.0 690.0C974.8 675.7 977.2 658.0 979.0 645.0C980.8 632.0 982.7 618.9 984.0 612.0C985.3 605.1 986.0 605.1 987.0 603.5C988.0 601.9 989.0 602.5 990.0 602.5C991.0 602.5 992.1 601.9 993.0 603.5C993.9 605.1 994.7 605.1 995.5 612.0C996.3 618.9 997.0 632.0 998.0 645.0C999.0 658.0 1000.3 675.7 1001.5 690.0C1002.7 704.3 1003.8 719.2 1005.0 731.0C1006.2 742.8 1007.3 751.2 1008.5 761.0C1009.7 770.8 1010.9 780.2 1012.0 790.0C1013.1 799.8 1014.3 811.3 1015.0 820.0C1015.7 828.7 1015.5 832.8 1016.0 842.0C1016.5 851.2 1017.4 862.5 1018.0 875.0C1018.6 887.5 1019.5 908.8 1019.6 917.0C1019.7 925.2 1018.6 921.2 1018.8 924.0C1019.0 926.8 1019.5 930.0 1021.0 934.0C1022.5 938.0 1025.3 943.0 1028.0 948.0C1030.7 953.0 1034.5 959.5 1037.0 964.0C1039.5 968.5 1041.4 972.2 1043.0 975.0C1044.6 977.8 1045.0 979.4 1046.5 980.5C1048.0 981.6 1049.8 982.0 1052.0 981.8C1054.2 981.5 1057.7 980.5 1060.0 979.0C1062.3 977.5 1064.5 975.5 1066.0 973.0C1067.5 970.5 1069.0 967.5 1069.0 964.0C1069.0 960.5 1067.8 956.7 1066.0 952.0C1064.2 947.3 1060.8 941.7 1058.0 936.0C1055.2 930.3 1051.4 923.7 1049.0 918.0C1046.6 912.3 1044.0 910.0 1043.7 902.0C1043.4 894.0 1045.5 881.2 1047.0 870.0C1048.5 858.8 1051.5 846.5 1053.0 835.0C1054.5 823.5 1056.0 812.7 1056.3 801.0C1056.6 789.3 1054.2 776.7 1055.0 765.0C1055.8 753.3 1059.5 743.5 1061.3 731.0C1063.1 718.5 1064.4 702.7 1066.0 690.0C1067.6 677.3 1069.6 665.8 1071.0 655.0C1072.4 644.2 1073.8 633.3 1074.5 625.0C1075.2 616.7 1075.2 612.5 1075.0 605.0C1074.8 597.5 1073.7 588.3 1073.0 580.0C1072.3 571.7 1071.8 563.0 1071.0 555.0C1070.2 547.0 1069.2 539.2 1068.0 532.0C1066.8 524.8 1065.5 518.8 1064.0 512.0C1062.5 505.2 1060.6 496.7 1059.3 491.0C1058.0 485.3 1056.9 482.7 1056.0 478.0C1055.1 473.3 1054.2 468.5 1054.0 463.0C1053.8 457.5 1054.1 451.3 1055.0 445.0C1055.9 438.7 1058.3 430.8 1059.3 425.0C1060.3 419.2 1060.7 416.7 1061.0 410.0C1061.3 403.3 1060.9 391.7 1061.0 385.0C1061.1 378.3 1061.0 375.5 1061.5 370.0C1062.0 364.5 1062.8 356.7 1064.0 352.0C1065.2 347.3 1067.0 344.5 1069.0 342.0C1071.0 339.5 1073.3 338.1 1076.0 337.0C1078.7 335.9 1078.2 335.2 1085.2 335.2C1092.2 335.2 1107.1 336.3 1118.0 337.0C1128.9 337.7 1140.1 338.6 1150.4 339.3C1160.7 340.0 1170.5 340.6 1180.0 341.0C1189.5 341.4 1198.2 342.1 1207.5 341.7C1216.8 341.3 1226.5 339.6 1236.0 338.5C1245.5 337.4 1255.1 336.2 1264.6 335.2C1274.1 334.2 1283.5 333.3 1293.0 332.5C1302.5 331.7 1314.1 330.1 1321.6 330.3C1329.1 330.5 1331.9 332.0 1338.0 333.6C1344.1 335.2 1352.0 337.9 1358.0 340.0C1364.0 342.1 1370.3 345.2 1374.0 346.0C1377.7 346.8 1379.1 345.2 1380.0 344.5C1380.9 343.8 1381.5 343.2 1379.5 341.5C1377.5 339.8 1370.8 335.8 1368.0 334.0C1365.2 332.2 1361.2 331.1 1362.4 330.6C1363.6 330.1 1369.6 330.9 1375.0 331.0C1380.4 331.1 1389.0 331.2 1395.0 331.0C1401.0 330.8 1407.8 330.6 1411.0 330.0C1414.2 329.4 1414.2 328.2 1414.5 327.5C1414.8 326.8 1416.8 326.8 1413.0 325.5C1409.2 324.2 1399.1 321.4 1392.0 319.5C1384.9 317.6 1378.3 315.5 1370.6 314.0C1362.9 312.5 1354.2 311.4 1346.0 310.5C1337.8 309.6 1330.4 309.0 1321.6 308.3C1312.8 307.6 1302.5 307.1 1293.0 306.5C1283.5 305.9 1274.3 305.5 1264.6 305.0C1254.9 304.5 1244.5 304.0 1235.0 303.5C1225.5 303.0 1215.3 301.9 1207.5 301.8C1199.7 301.7 1194.8 302.6 1188.0 303.0C1181.2 303.4 1174.7 304.3 1167.0 304.2C1159.3 304.1 1150.2 303.4 1142.0 302.5C1133.8 301.6 1124.8 300.1 1118.0 298.5C1111.2 296.9 1106.5 294.6 1101.0 293.0C1095.5 291.4 1091.0 289.7 1085.0 288.8C1079.0 287.9 1071.8 287.9 1065.0 287.5C1058.2 287.1 1051.3 287.9 1044.5 286.5C1037.7 285.1 1028.5 281.4 1024.0 279.0C1019.5 276.6 1018.9 274.5 1017.5 272.0C1016.1 269.5 1015.9 267.7 1015.5 264.0C1015.1 260.3 1015.2 255.0 1015.0 250.0C1014.8 245.0 1022.8 236.7 1014.0 234.0C1005.2 231.3 970.8 231.3 962.0 234.0Z"/></g><g clip-path="url(#cBody)"><path d="M560 327L644 318L758 311L856 308L930 296M1400 325L1321 314L1207 308L1118 305L1050 295" stroke="#efc8ae" stroke-width="9" fill="none" opacity=".8" filter="url(#bl4)"/><path d="M640 337L758 347L890 342M1325 333L1207 344L1085 338" stroke="#74503f" stroke-width="8" fill="none" opacity=".6" filter="url(#bl2)"/><ellipse cx="990" cy="312" rx="70" ry="22" fill="#f1cbb2" opacity=".8" filter="url(#bl8)"/><ellipse cx="925" cy="306" rx="26" ry="12" fill="#efc8ae" opacity=".7" filter="url(#bl8)"/><ellipse cx="1052" cy="306" rx="26" ry="12" fill="#efc8ae" opacity=".7" filter="url(#bl8)"/><path d="M950 236L1026 236L1024 268L1019 273C1010 280 1000 291 990 293C980 291 970 280 957 273L952 268Z" fill="#2a1d1a" filter="url(#bl2)"/><path d="M957.5 262L959 274L965 279L964.5 262ZM1018.5 262L1017 274L1011 279L1011.5 262Z" fill="#94705e" opacity=".85" filter="url(#bl2)"/><ellipse cx="990" cy="475" rx="36" ry="50" fill="#ebc2a8" opacity=".5" filter="url(#bl14)"/><ellipse cx="990" cy="440" rx="50" ry="12" fill="#8a6050" opacity=".35" filter="url(#bl8)"/><path d="M990 435V494" stroke="#8a6050" stroke-width="3" opacity=".18" filter="url(#bl2)"/><path d="M968 452Q966 490 972 520M1012 452Q1014 490 1008 520" stroke="#8a6050" stroke-width="4" fill="none" opacity=".22" filter="url(#bl4)"/><ellipse cx="990.3" cy="504" rx="1.6" ry="3.4" fill="#8a4a40" filter="url(#bl1)"/><path d="M915 418Q950 440 990 412Q1030 440 1064 416L1064 434Q1030 450 990 428Q950 450 915 434Z" fill="#3f2a24" opacity=".45" filter="url(#bl4)"/><ellipse cx="940" cy="660" rx="15" ry="65" fill="#efc7ac" opacity=".55" filter="url(#bl14)"/><ellipse cx="1036" cy="660" rx="15" ry="65" fill="#efc7ac" opacity=".55" filter="url(#bl14)"/><ellipse cx="943" cy="756" rx="18" ry="9" fill="#6a473b" opacity=".4" filter="url(#bl4)"/><ellipse cx="1033" cy="756" rx="18" ry="9" fill="#6a473b" opacity=".4" filter="url(#bl4)"/><ellipse cx="936" cy="835" rx="8" ry="55" fill="#e6bca2" opacity=".6" filter="url(#bl8)"/><ellipse cx="1036" cy="835" rx="8" ry="55" fill="#e6bca2" opacity=".6" filter="url(#bl8)"/><path d="M968 600Q990 650 1010 600Z" fill="#2a1a15" opacity=".5" filter="url(#bl4)"/><path d="M984 610L975 690L969 740M996 610L1001 690L1006 740" stroke="#4a2f26" stroke-width="12" fill="none" opacity=".4" filter="url(#bl8)"/><ellipse cx="929" cy="950" rx="12" ry="30" fill="#e9b9a0" opacity=".85" filter="url(#bl4)" transform="rotate(14 929 950)"/><ellipse cx="1043" cy="945" rx="11" ry="30" fill="#e9b9a0" opacity=".85" filter="url(#bl4)" transform="rotate(-26 1043 945)"/><ellipse cx="937" cy="905" rx="9" ry="14" fill="#d9a890" opacity=".6" filter="url(#bl4)"/><ellipse cx="1032" cy="905" rx="9" ry="14" fill="#d9a890" opacity=".6" filter="url(#bl4)"/><rect x="890" y="600" width="200" height="400" fill="url(#legFade)"/><linearGradient id="mg" gradientUnits="userSpaceOnUse" x1="0" y1="330" x2="0" y2="930"><stop offset="0" stop-color="#000"/><stop offset=".035" stop-color="#fff"/><stop offset=".6" stop-color="#fff"/><stop offset=".85" stop-color="#777"/><stop offset=".97" stop-color="#000"/></linearGradient><mask id="mTrunk" maskUnits="userSpaceOnUse" x="893" y="330" width="194" height="600"><rect x="893" y="330" width="194" height="600" fill="url(#mg)"/></mask><g mask="url(#mTrunk)"><path d="M962.0 234.0C953.2 236.7 961.2 245.0 961.0 250.0C960.8 255.0 961.0 260.3 960.5 264.0C960.0 267.7 959.6 269.5 958.0 272.0C956.4 274.5 955.8 276.4 951.0 279.0C946.2 281.6 936.7 285.5 929.0 287.5C921.3 289.5 913.2 289.8 905.0 291.2C896.8 292.6 888.2 294.4 880.0 296.0C871.8 297.6 864.3 299.5 856.0 301.0C847.7 302.5 838.2 304.1 830.0 305.0C821.8 305.9 815.3 306.7 807.0 306.7C798.7 306.7 788.2 305.4 780.0 305.0C771.8 304.6 765.5 303.9 758.0 304.2C750.5 304.4 743.2 305.8 735.0 306.5C726.8 307.2 718.2 307.6 709.0 308.3C699.8 309.0 690.8 309.7 680.0 310.5C669.2 311.3 654.0 312.3 644.0 313.2C634.0 314.1 628.2 315.0 620.0 316.0C611.8 317.0 603.3 317.8 595.0 319.0C586.7 320.2 578.1 322.1 570.0 323.5C561.9 324.9 550.5 326.5 546.3 327.5C542.0 328.5 544.4 328.8 544.5 329.5C544.6 330.2 543.9 331.1 547.0 332.0C550.1 332.9 556.7 334.5 563.0 335.0C569.3 335.5 578.8 335.2 585.0 335.2C591.2 335.2 596.5 334.9 600.0 335.0C603.5 335.1 606.7 334.6 606.0 335.8C605.3 337.0 599.0 339.8 596.0 342.0C593.0 344.2 589.4 347.3 588.2 349.0C587.0 350.7 588.1 351.5 589.0 352.0C589.9 352.5 590.1 353.0 593.6 352.0C597.1 351.0 602.9 348.5 610.0 346.0C617.1 343.5 630.3 338.9 636.0 337.0C641.7 335.1 638.7 334.6 644.0 334.4C649.3 334.2 659.8 335.3 668.0 336.0C676.2 336.7 683.5 337.5 693.0 338.5C702.5 339.5 714.2 340.9 725.0 342.0C735.8 343.1 747.2 344.8 758.0 345.0C768.8 345.2 779.2 344.3 790.0 343.5C800.8 342.7 811.3 340.8 823.0 340.0C834.7 339.2 849.0 338.6 860.0 338.5C871.0 338.4 882.5 338.9 889.0 339.3C895.5 339.7 896.2 339.7 899.0 341.0C901.8 342.3 904.0 343.5 906.0 347.0C908.0 350.5 909.7 356.5 911.0 362.0C912.3 367.5 913.2 373.7 914.0 380.0C914.8 386.3 914.7 394.2 915.5 400.0C916.3 405.8 917.8 410.8 919.0 415.0C920.2 419.2 921.3 420.0 923.0 425.0C924.7 430.0 927.5 438.7 929.0 445.0C930.5 451.3 931.9 457.5 931.7 463.0C931.5 468.5 929.7 473.3 928.0 478.0C926.3 482.7 923.7 485.3 921.4 491.0C919.1 496.7 916.0 505.2 914.0 512.0C912.0 518.8 911.0 524.8 909.3 532.0C907.6 539.2 905.4 547.0 904.0 555.0C902.6 563.0 901.5 571.7 900.7 580.0C899.9 588.3 899.0 597.5 899.0 605.0C899.0 612.5 899.5 616.7 900.5 625.0C901.5 633.3 903.1 644.2 905.0 655.0C906.9 665.8 909.8 677.3 912.0 690.0C914.2 702.7 917.2 718.5 918.0 731.0C918.8 743.5 917.1 753.3 916.5 765.0C915.9 776.7 914.7 789.3 914.6 801.0C914.5 812.7 914.8 823.5 916.0 835.0C917.2 846.5 920.4 858.8 922.0 870.0C923.6 881.2 925.4 894.0 925.6 902.0C925.8 910.0 924.4 912.5 923.0 918.0C921.6 923.5 919.3 929.3 917.0 935.0C914.7 940.7 910.9 946.8 909.0 952.0C907.1 957.2 905.8 962.3 905.5 966.0C905.2 969.7 905.8 971.3 907.0 974.0C908.2 976.7 910.5 979.9 913.0 982.0C915.5 984.1 919.2 985.6 922.0 986.5C924.8 987.4 927.5 987.8 930.0 987.5C932.5 987.2 935.0 986.6 936.7 985.0C938.4 983.4 938.8 981.2 940.0 978.0C941.2 974.8 942.7 970.3 944.0 966.0C945.3 961.7 947.0 956.3 948.0 952.0C949.0 947.7 949.9 943.7 950.0 940.0C950.1 936.3 948.5 933.8 948.5 930.0C948.5 926.2 949.3 926.2 949.7 917.0C950.1 907.8 950.4 887.5 951.0 875.0C951.6 862.5 952.3 851.2 953.3 842.0C954.3 832.8 955.2 828.7 957.0 820.0C958.8 811.3 962.1 799.8 964.0 790.0C965.9 780.2 967.5 770.8 968.3 761.0C969.0 751.2 967.7 742.8 968.5 731.0C969.3 719.2 971.2 704.3 973.0 690.0C974.8 675.7 977.2 658.0 979.0 645.0C980.8 632.0 982.7 618.9 984.0 612.0C985.3 605.1 986.0 605.1 987.0 603.5C988.0 601.9 989.0 602.5 990.0 602.5C991.0 602.5 992.1 601.9 993.0 603.5C993.9 605.1 994.7 605.1 995.5 612.0C996.3 618.9 997.0 632.0 998.0 645.0C999.0 658.0 1000.3 675.7 1001.5 690.0C1002.7 704.3 1003.8 719.2 1005.0 731.0C1006.2 742.8 1007.3 751.2 1008.5 761.0C1009.7 770.8 1010.9 780.2 1012.0 790.0C1013.1 799.8 1014.3 811.3 1015.0 820.0C1015.7 828.7 1015.5 832.8 1016.0 842.0C1016.5 851.2 1017.4 862.5 1018.0 875.0C1018.6 887.5 1019.5 908.8 1019.6 917.0C1019.7 925.2 1018.6 921.2 1018.8 924.0C1019.0 926.8 1019.5 930.0 1021.0 934.0C1022.5 938.0 1025.3 943.0 1028.0 948.0C1030.7 953.0 1034.5 959.5 1037.0 964.0C1039.5 968.5 1041.4 972.2 1043.0 975.0C1044.6 977.8 1045.0 979.4 1046.5 980.5C1048.0 981.6 1049.8 982.0 1052.0 981.8C1054.2 981.5 1057.7 980.5 1060.0 979.0C1062.3 977.5 1064.5 975.5 1066.0 973.0C1067.5 970.5 1069.0 967.5 1069.0 964.0C1069.0 960.5 1067.8 956.7 1066.0 952.0C1064.2 947.3 1060.8 941.7 1058.0 936.0C1055.2 930.3 1051.4 923.7 1049.0 918.0C1046.6 912.3 1044.0 910.0 1043.7 902.0C1043.4 894.0 1045.5 881.2 1047.0 870.0C1048.5 858.8 1051.5 846.5 1053.0 835.0C1054.5 823.5 1056.0 812.7 1056.3 801.0C1056.6 789.3 1054.2 776.7 1055.0 765.0C1055.8 753.3 1059.5 743.5 1061.3 731.0C1063.1 718.5 1064.4 702.7 1066.0 690.0C1067.6 677.3 1069.6 665.8 1071.0 655.0C1072.4 644.2 1073.8 633.3 1074.5 625.0C1075.2 616.7 1075.2 612.5 1075.0 605.0C1074.8 597.5 1073.7 588.3 1073.0 580.0C1072.3 571.7 1071.8 563.0 1071.0 555.0C1070.2 547.0 1069.2 539.2 1068.0 532.0C1066.8 524.8 1065.5 518.8 1064.0 512.0C1062.5 505.2 1060.6 496.7 1059.3 491.0C1058.0 485.3 1056.9 482.7 1056.0 478.0C1055.1 473.3 1054.2 468.5 1054.0 463.0C1053.8 457.5 1054.1 451.3 1055.0 445.0C1055.9 438.7 1058.3 430.8 1059.3 425.0C1060.3 419.2 1060.7 416.7 1061.0 410.0C1061.3 403.3 1060.9 391.7 1061.0 385.0C1061.1 378.3 1061.0 375.5 1061.5 370.0C1062.0 364.5 1062.8 356.7 1064.0 352.0C1065.2 347.3 1067.0 344.5 1069.0 342.0C1071.0 339.5 1073.3 338.1 1076.0 337.0C1078.7 335.9 1078.2 335.2 1085.2 335.2C1092.2 335.2 1107.1 336.3 1118.0 337.0C1128.9 337.7 1140.1 338.6 1150.4 339.3C1160.7 340.0 1170.5 340.6 1180.0 341.0C1189.5 341.4 1198.2 342.1 1207.5 341.7C1216.8 341.3 1226.5 339.6 1236.0 338.5C1245.5 337.4 1255.1 336.2 1264.6 335.2C1274.1 334.2 1283.5 333.3 1293.0 332.5C1302.5 331.7 1314.1 330.1 1321.6 330.3C1329.1 330.5 1331.9 332.0 1338.0 333.6C1344.1 335.2 1352.0 337.9 1358.0 340.0C1364.0 342.1 1370.3 345.2 1374.0 346.0C1377.7 346.8 1379.1 345.2 1380.0 344.5C1380.9 343.8 1381.5 343.2 1379.5 341.5C1377.5 339.8 1370.8 335.8 1368.0 334.0C1365.2 332.2 1361.2 331.1 1362.4 330.6C1363.6 330.1 1369.6 330.9 1375.0 331.0C1380.4 331.1 1389.0 331.2 1395.0 331.0C1401.0 330.8 1407.8 330.6 1411.0 330.0C1414.2 329.4 1414.2 328.2 1414.5 327.5C1414.8 326.8 1416.8 326.8 1413.0 325.5C1409.2 324.2 1399.1 321.4 1392.0 319.5C1384.9 317.6 1378.3 315.5 1370.6 314.0C1362.9 312.5 1354.2 311.4 1346.0 310.5C1337.8 309.6 1330.4 309.0 1321.6 308.3C1312.8 307.6 1302.5 307.1 1293.0 306.5C1283.5 305.9 1274.3 305.5 1264.6 305.0C1254.9 304.5 1244.5 304.0 1235.0 303.5C1225.5 303.0 1215.3 301.9 1207.5 301.8C1199.7 301.7 1194.8 302.6 1188.0 303.0C1181.2 303.4 1174.7 304.3 1167.0 304.2C1159.3 304.1 1150.2 303.4 1142.0 302.5C1133.8 301.6 1124.8 300.1 1118.0 298.5C1111.2 296.9 1106.5 294.6 1101.0 293.0C1095.5 291.4 1091.0 289.7 1085.0 288.8C1079.0 287.9 1071.8 287.9 1065.0 287.5C1058.2 287.1 1051.3 287.9 1044.5 286.5C1037.7 285.1 1028.5 281.4 1024.0 279.0C1019.5 276.6 1018.9 274.5 1017.5 272.0C1016.1 269.5 1015.9 267.7 1015.5 264.0C1015.1 260.3 1015.2 255.0 1015.0 250.0C1014.8 245.0 1022.8 236.7 1014.0 234.0C1005.2 231.3 970.8 231.3 962.0 234.0Z" fill="none" stroke="#4e3229" stroke-width="26" opacity=".6" filter="url(#bl8)"/></g></g><path d="M949.0 192.0C947.7 189.4 945.4 191.7 944.0 192.5C942.6 193.3 940.9 194.6 940.5 197.0C940.1 199.4 940.8 203.5 941.5 207.0C942.2 210.5 943.7 214.8 945.0 218.0C946.3 221.2 948.2 224.8 949.5 226.0C950.8 227.2 952.6 228.0 953.0 225.0C953.4 222.0 952.7 213.5 952.0 208.0C951.3 202.5 950.3 194.6 949.0 192.0Z" fill="#c89b85"/><path d="M1027.0 192.0C1028.0 189.4 1029.9 191.7 1031.0 192.5C1032.1 193.3 1033.2 194.6 1033.5 197.0C1033.8 199.4 1033.6 203.5 1033.0 207.0C1032.4 210.5 1031.2 214.8 1030.0 218.0C1028.8 221.2 1027.2 224.8 1026.0 226.0C1024.8 227.2 1023.2 228.0 1023.0 225.0C1022.8 222.0 1024.3 213.5 1025.0 208.0C1025.7 202.5 1026.0 194.6 1027.0 192.0Z" fill="#c89b85"/><path d="M949.0 192.0C947.7 189.4 945.4 191.7 944.0 192.5C942.6 193.3 940.9 194.6 940.5 197.0C940.1 199.4 940.8 203.5 941.5 207.0C942.2 210.5 943.7 214.8 945.0 218.0C946.3 221.2 948.2 224.8 949.5 226.0C950.8 227.2 952.6 228.0 953.0 225.0C953.4 222.0 952.7 213.5 952.0 208.0C951.3 202.5 950.3 194.6 949.0 192.0Z" fill="none" stroke="#7a5548" stroke-width="1" opacity=".6"/><path d="M1027.0 192.0C1028.0 189.4 1029.9 191.7 1031.0 192.5C1032.1 193.3 1033.2 194.6 1033.5 197.0C1033.8 199.4 1033.6 203.5 1033.0 207.0C1032.4 210.5 1031.2 214.8 1030.0 218.0C1028.8 221.2 1027.2 224.8 1026.0 226.0C1024.8 227.2 1023.2 228.0 1023.0 225.0C1022.8 222.0 1024.3 213.5 1025.0 208.0C1025.7 202.5 1026.0 194.6 1027.0 192.0Z" fill="none" stroke="#7a5548" stroke-width="1" opacity=".6"/><g filter="url(#fHead)"><path d="M988.0 134.5C993.0 134.5 998.3 135.0 1003.0 136.5C1007.7 138.0 1012.3 140.2 1016.0 143.5C1019.7 146.8 1022.9 151.2 1025.0 156.0C1027.1 160.8 1028.0 166.3 1028.5 172.0C1029.0 177.7 1028.3 184.0 1028.0 190.0C1027.7 196.0 1027.2 202.3 1026.5 208.0C1025.8 213.7 1025.2 218.7 1024.0 224.0C1022.8 229.3 1021.3 235.3 1019.0 240.0C1016.7 244.7 1013.2 248.8 1010.0 252.0C1006.8 255.2 1003.3 257.4 1000.0 259.0C996.7 260.6 993.3 261.5 990.0 261.5C986.7 261.5 983.3 260.6 980.0 259.0C976.7 257.4 973.2 255.2 970.0 252.0C966.8 248.8 963.4 244.7 961.0 240.0C958.6 235.3 957.0 229.3 955.5 224.0C954.0 218.7 953.2 213.7 952.0 208.0C950.8 202.3 949.3 196.0 948.5 190.0C947.7 184.0 946.8 177.7 947.0 172.0C947.2 166.3 948.0 160.8 950.0 156.0C952.0 151.2 955.2 146.8 959.0 143.5C962.8 140.2 968.2 138.0 973.0 136.5C977.8 135.0 983.0 134.5 988.0 134.5Z"/></g><g clip-path="url(#cHead)"><ellipse cx="988" cy="166" rx="26" ry="20" fill="#f5d2bb" opacity=".75" filter="url(#bl8)"/><ellipse cx="961" cy="233" rx="9" ry="24" fill="#6a473b" opacity=".55" filter="url(#bl4)"/><ellipse cx="1018" cy="233" rx="9" ry="24" fill="#6a473b" opacity=".55" filter="url(#bl4)"/><ellipse cx="990" cy="250" rx="14" ry="6" fill="#e0b49c" opacity=".6" filter="url(#bl4)"/><path d="M960 190.5Q969 184 983 189.5M998 189.5Q1011 184 1021 190.5" stroke="#5a3a2e" stroke-width="2.4" fill="none" opacity=".8"/><ellipse cx="971.5" cy="206" rx="9.5" ry="3" fill="#5a3a2e" opacity=".5" filter="url(#bl2)"/><ellipse cx="1009.5" cy="206" rx="9.5" ry="3" fill="#5a3a2e" opacity=".5" filter="url(#bl2)"/><ellipse cx="971.5" cy="201" rx="10.5" ry="4.6" fill="#120d0b" filter="url(#bl1)"/><ellipse cx="971.5" cy="200.2" rx="6.3" ry="2.5" fill="#dfe3ea"/><ellipse cx="1009.5" cy="201" rx="10.5" ry="4.6" fill="#120d0b" filter="url(#bl1)"/><ellipse cx="1009.5" cy="200.2" rx="6.3" ry="2.5" fill="#dfe3ea"/><path d="M984.5 203Q982 218 981.5 226Q990 232.5 1000.5 226Q999.5 218 997 203" fill="#9a705e" opacity=".5" filter="url(#bl2)"/><path d="M989.3 190L988 221L993.5 221L992.2 190Z" fill="#f2ceb6" opacity=".75" filter="url(#bl2)"/><ellipse cx="991" cy="228.2" rx="8.4" ry="2.6" fill="#4a2e24" opacity=".9" filter="url(#bl1)"/><path d="M976 237.3Q984 233 990.5 235Q997 233 1006 237.3Q990.5 239.5 976 237.3Z" fill="#a5655a"/><path d="M976 237.3Q990.5 239.5 1006 237.3Q998 244 990.5 244Q983 244 976 237.3Z" fill="#cf8f82"/><path d="M976 237.3Q990 239.5 1006 237.3" stroke="#6a4036" stroke-width="1" fill="none"/><ellipse cx="990.5" cy="247" rx="8" ry="2" fill="#8a6252" opacity=".45" filter="url(#bl1)"/></g><g filter="url(#fBik)"><path d="M940 322C926 342 916 360 914.5 382C913 405 925 420 945 424C965 425 980 415 992 408L984 398C966 380 948 350 940 322Z"/><path d="M1039.5 322.0 C1053.5 342.0 1063.5 360.0 1065.0 382.0 C1066.5 405.0 1054.5 420.0 1034.5 424.0 C1014.5 425.0 999.5 415.0 987.5 408.0 L995.5 398.0 C1013.5 380.0 1031.5 350.0 1039.5 322.0 Z"/></g><path d="M951 277L955.5 277C952 288 950 296 950.5 303C951 315 952 322 954 330C959 353 976 380 992 395L1000 402L992 410C972 398 953 372 945 347C940 338 937.8 332 937.8 330C938.5 318 940 308 941.4 301C943.5 292 947 283 951 277Z" fill="#464979"/><path d="M1028.5 277.0 L1024.0 277.0 C1027.5 288.0 1029.5 296.0 1029.0 303.0 C1028.5 315.0 1027.5 322.0 1025.5 330.0 C1020.5 353.0 1003.5 380.0 987.5 395.0 L979.5 402.0 L987.5 410.0 C1007.5 398.0 1026.5 372.0 1034.5 347.0 C1039.5 338.0 1041.7 332.0 1041.7 330.0 C1041.0 318.0 1039.5 308.0 1038.1 301.0 C1036.0 292.0 1032.5 283.0 1028.5 277.0 Z" fill="#4b4e80"/><path d="M951.5 281C946 298 944 315 946 332C952 356 970 384 990 400" stroke="#5c5f98" stroke-width="3" fill="none" opacity=".7"/><path d="M1028.0 281.0 C1033.5 298.0 1035.5 315.0 1033.5 332.0 C1027.5 356.0 1009.5 384.0 989.5 400.0 " stroke="#5c5f98" stroke-width="3" fill="none" opacity=".7"/><path d="M921 377L933 358L941 366L928 388Z" fill="#686ba6" opacity=".7"/><path d="M1058.5 377.0 L1046.5 358.0 L1038.5 366.0 L1051.5 388.0 Z" fill="#686ba6" opacity=".7"/><path d="M918 409Q950 418 985 402" stroke="#6c6ea0" stroke-width="1.2" fill="none" opacity=".7"/><path d="M1061.5 409.0 Q1029.5 418.0 994.5 402.0 " stroke="#6c6ea0" stroke-width="1.2" fill="none" opacity=".7"/><g filter="url(#fBik)"><path d="M907.5 532C930 545 960 556 990 556C1020 556 1050 545 1069.5 532L1072.5 550C1045 560 1020 575 1002 596C996 603 984 603 978 596C962 575 935 560 905 550Z"/></g><path d="M907.5 532C930 545 960 556 990 556C1020 556 1050 545 1069.5 532L1071.5 545C1050 557 1020 567 990 567C960 567 930 557 906 545Z" fill="#434678" opacity=".95"/><path d="M907 535.5C930 548 960 559 990 559C1020 559 1050 548 1070 535.5" stroke="#5f629c" stroke-width="2" fill="none" opacity=".7"/><path d="M906.5 540.5C930 553 960 563.5 990 563.5C1020 563.5 1050 553 1071 540.5" stroke="#2b2c4a" stroke-width="1.1" fill="none" opacity=".8"/><path d="M909.5 965L908 976M914 968L912.5 979.5M919 971L917.5 983M925.5 973L925 986M1052 970L1052.5 982M1058 968L1059.5 978.5M1062.5 965L1064.5 975M1066 961L1068.5 971" stroke="#3a221b" stroke-width="1.3" opacity=".8"/></svg></div><div class="t" style="left:42px;top:93.2px;font-size:10px;color:#e8ecf2">Camera 1 100%</div><svg class="abs" style="left:0;top:60px" width="34" height="500" viewBox="0 60 34 500"><defs>
<linearGradient id="lz" x1="0" y1="0" x2="1" y2="1"><stop offset="0" stop-color="#e6ceb4"/><stop offset=".45" stop-color="#b59377"/><stop offset="1" stop-color="#553a28"/></linearGradient>
<linearGradient id="lzh" x1="0" y1="0" x2="1" y2="0"><stop offset="0" stop-color="#e8d0b6"/><stop offset=".45" stop-color="#c9a98c"/><stop offset="1" stop-color="#5e432f"/></linearGradient>
<radialGradient id="lzr" cx=".35" cy=".3" r=".75"><stop offset="0" stop-color="#ecd8c2"/><stop offset=".5" stop-color="#b6957a"/><stop offset="1" stop-color="#523826"/></radialGradient>
<filter id="lds" x="-30%" y="-30%" width="170%" height="170%"><feGaussianBlur in="SourceAlpha" stdDeviation="1"/><feOffset dx="1.5" dy="1.8"/><feComponentTransfer><feFuncA type="linear" slope=".7"/></feComponentTransfer><feMerge><feMergeNode/><feMergeNode in="SourceGraphic"/></feMerge></filter>
<filter id="glow" x="-60%" y="-60%" width="220%" height="220%"><feGaussianBlur in="SourceAlpha" stdDeviation="2.2" result="b"/><feFlood flood-color="#f4f4c8"/><feComposite operator="in" in2="b"/><feComponentTransfer><feFuncA type="linear" slope="1.3"/></feComponentTransfer><feMerge><feMergeNode/><feMergeNode in="SourceGraphic"/></feMerge></filter>
</defs><rect x="4" y="61.3" width="25" height="1.2" fill="#0c1424"/><rect x="4" y="274.3" width="25" height="1.2" fill="#0c1424"/><rect x="4" y="450.5" width="25" height="1.2" fill="#0c1424"/><g filter="url(#lds)"><path d="M6.2 77.6L21.7 81L17 84.5L26.2 93.5L24 96L14.5 87.2L10.4 93Z" fill="url(#lz)"/><path d="M6.2 77.6L14.5 87.2L10.4 93Z" fill="#8a6a50" opacity=".7"/><path d="M26.9 108.6L9.3 112.8L21.7 124.1Z" fill="url(#lz)"/><path d="M9.3 112.8L21.7 124.1L19 116.5Z" fill="#3a2616"/><path d="M7.2 127.2L9.3 119L17.6 125.2Z" fill="url(#lz)"/><path d="M9.3 119L17.6 125.2L12 123.5Z" fill="#6e503a"/><path d="M12 144.5A8 8 0 1 1 12.5 158" fill="none" stroke="url(#lz)" stroke-width="4.2" stroke-linecap="butt"/><path d="M4.5 150L13 143.5L13.5 152.5Z" fill="url(#lz)"/><ellipse cx="14.5" cy="181.5" rx="11" ry="5.2" transform="rotate(-24 14.5 181.5)" fill="none" stroke="url(#lz)" stroke-width="2.6"/><circle cx="13.6" cy="179.6" r="5.3" fill="url(#lzr)"/><path d="M4.7 186.5A11 5.2 -24 0 0 24.3 176.6" fill="none" stroke="url(#lz)" stroke-width="2.6"/><circle cx="9.5" cy="208.3" r="3.1" fill="url(#lzr)"/><path d="M10.5 210.5L13.5 208.2L24.5 220.5L26.5 225.6L21.8 222.8Z" fill="url(#lzh)"/><path d="M15 213.5l2.5-2M18 216.8l2.4-2M21 220l2.2-1.8" stroke="#6e503a" stroke-width=".8"/><path d="M8 245L19 240.5L27.5 252.5L17 257.5Z" fill="#7a5a42"/><rect x="6" y="238" width="9" height="14.5" rx="4.2" transform="rotate(-38 10.5 245)" fill="none" stroke="url(#lz)" stroke-width="2.2"/><rect x="15.5" y="243" width="8" height="13" rx="3.8" transform="rotate(-38 19.5 249.5)" fill="none" stroke="url(#lz)" stroke-width="2.2"/><g transform="translate(16.6 300.7) rotate(18) scale(1.0 1.0)"><path d="M-2.6 -3V-7.6H-5.4L0 -13.4L5.4 -7.6H2.6V-3Z" fill="url(#lz)" transform="rotate(0)"/><path d="M-2.6 -3V-7.6H-5.4L0 -13.4L5.4 -7.6H2.6V-3Z" fill="url(#lz)" transform="rotate(90)"/><path d="M-2.6 -3V-7.6H-5.4L0 -13.4L5.4 -7.6H2.6V-3Z" fill="url(#lz)" transform="rotate(180)"/><path d="M-2.6 -3V-7.6H-5.4L0 -13.4L5.4 -7.6H2.6V-3Z" fill="url(#lz)" transform="rotate(270)"/></g><circle cx="16.6" cy="300.2" r="3.6" fill="url(#lzr)"/><g transform="translate(16.6 331.6) rotate(0) scale(1.05 1.05)"><path d="M-2.6 -3V-7.6H-5.4L0 -13.4L5.4 -7.6H2.6V-3Z" fill="url(#lz)" transform="rotate(0)"/><path d="M-2.6 -3V-7.6H-5.4L0 -13.4L5.4 -7.6H2.6V-3Z" fill="url(#lz)" transform="rotate(90)"/><path d="M-2.6 -3V-7.6H-5.4L0 -13.4L5.4 -7.6H2.6V-3Z" fill="url(#lz)" transform="rotate(180)"/><path d="M-2.6 -3V-7.6H-5.4L0 -13.4L5.4 -7.6H2.6V-3Z" fill="url(#lz)" transform="rotate(270)"/></g><circle cx="16.6" cy="331.1" r="3.6" fill="url(#lzr)"/><g transform="translate(16.6 364.5) rotate(0) scale(1.05 0.756)"><path d="M-2.6 -3V-7.6H-5.4L0 -13.4L5.4 -7.6H2.6V-3Z" fill="url(#lz)" transform="rotate(0)"/><path d="M-2.6 -3V-7.6H-5.4L0 -13.4L5.4 -7.6H2.6V-3Z" fill="url(#lz)" transform="rotate(90)"/><path d="M-2.6 -3V-7.6H-5.4L0 -13.4L5.4 -7.6H2.6V-3Z" fill="url(#lz)" transform="rotate(180)"/><path d="M-2.6 -3V-7.6H-5.4L0 -13.4L5.4 -7.6H2.6V-3Z" fill="url(#lz)" transform="rotate(270)"/></g><circle cx="16.6" cy="364.0" r="3.6" fill="url(#lzr)"/><circle cx="16.3" cy="395.8" r="13.6" fill="url(#lzr)"/><circle cx="16.3" cy="395.8" r="12.6" fill="none" stroke="#7a5a42" stroke-width="1"/><g transform="translate(16.3 395.8)"><path d="M-1.7 -1V-6.2H-4L0 -10.8L4 -6.2H1.7V-1Z" fill="#4a3020" transform="rotate(0)"/><path d="M-1.7 -1V-6.2H-4L0 -10.8L4 -6.2H1.7V-1Z" fill="#4a3020" transform="rotate(90)"/><path d="M-1.7 -1V-6.2H-4L0 -10.8L4 -6.2H1.7V-1Z" fill="#4a3020" transform="rotate(180)"/><path d="M-1.7 -1V-6.2H-4L0 -10.8L4 -6.2H1.7V-1Z" fill="#4a3020" transform="rotate(270)"/></g><path d="M3.5 418.5L17.5 416L29 419.5L27 432.5L15.5 441.5L6 433.5Z" fill="#5e432f"/><path d="M3.5 418.5L17.5 416L16.8 429L6 433.5Z" fill="#8a6a50"/><path d="M17.5 416L29 419.5L27 432.5L16.8 429Z" fill="#6e503a"/><path d="M16.8 429L27 432.5L15.5 441.5L6 433.5Z" fill="#ecd6be"/><path d="M11.4 431.2L21.2 437M21.9 430.7L10.7 437.5" stroke="#b08e70" stroke-width="1"/></g><path d="M26.3 405.3l4.4 2.1l-4.4 2.1z" fill="#71798c" stroke="#fff" stroke-width="1.1" stroke-linejoin="round"/><g filter="url(#glow)"><path d="M6 469.5H10.5L12 467H20.5L22 469.5H27.5V485.5H6Z" fill="rgba(228,232,222,.4)" stroke="#f4f4ea" stroke-width="1.8" stroke-linejoin="round"/><circle cx="16.7" cy="477.5" r="5.2" fill="#aab0a8" stroke="#f4f4ea" stroke-width="1.6"/><rect x="22.5" y="471.2" width="3" height="2" fill="#f4f4ea"/></g><path d="M10.5 517.5C8 513 6.5 508.5 7 506C8 505 9.5 506 10.2 508.5L11 511V499.5C11 497.5 13.6 497.5 13.6 499.5V507V497.3C13.6 495.3 16.3 495.3 16.3 497.3V507V498C16.3 496 19 496 19 498V507.5V500.5C19 498.7 21.5 498.7 21.5 500.5L21.7 509.5C23.2 510 24.8 508 25.6 509.3C25.6 512.5 23 515.5 19.5 517.7Z" fill="#98a2b4"/><path d="M27.2 510.6l3.6 3l-3.6 3z" fill="#0c1424"/><circle cx="14" cy="537.5" r="6" fill="none" stroke="#98a2b4" stroke-width="2"/><path d="M18.6 542.3L24.2 548.3" stroke="#98a2b4" stroke-width="2.8" stroke-linecap="round"/><path d="M27.2 543.2l3.6 3l-3.6 3z" fill="#0c1424"/></svg><svg class="abs" style="left:16px;top:0" width="28" height="23" viewBox="16 0 28 23"><path d="M23.6 0C24 1.5 24.6 2.6 25.2 3.1C26.2 4.8 27.3 6.2 28.6 7.1C30.5 8.5 32.8 9.3 34.9 9.5C33.2 10.3 31.5 10.5 29.7 10.2C27.6 9.8 25.8 9 24.3 7.8C23.2 6.9 22.2 5.8 21.7 4.5C21.6 2.8 22.4 1.2 23.6 0ZM21 7.1C21.8 9 22.3 11 22.4 13.2C22.4 14.9 22 16.5 21 18C20.2 19.4 19.2 20.7 17.9 21.8C19.8 21.8 21.6 21.5 23.4 20.8C24.2 19 24.6 17.1 24.5 15.1C24.4 13.3 24.1 11.5 23.4 9.9C22.8 8.8 22 7.8 21 7.1ZM39.9 16.3C39 14.7 37.9 13.3 36.6 12.1C35.1 12 33.5 12.2 32.1 12.8C30.5 13.6 29.2 14.8 28.1 16.3C27 17.6 26.2 19 25.5 20.6C26.4 19.4 27.4 18.4 28.6 17.5C29.9 16.5 31.3 15.8 32.8 15.4C34.5 15 36.3 15 38 15.4C38.7 15.6 39.3 15.9 39.9 16.3Z" fill="#fff"/></svg><svg class="abs" style="left:1560px;top:0" width="350" height="23" viewBox="1560 0 350 23"><defs>
<linearGradient id="lz" x1="0" y1="0" x2="1" y2="1"><stop offset="0" stop-color="#e6ceb4"/><stop offset=".45" stop-color="#b59377"/><stop offset="1" stop-color="#553a28"/></linearGradient>
<linearGradient id="lzh" x1="0" y1="0" x2="1" y2="0"><stop offset="0" stop-color="#e8d0b6"/><stop offset=".45" stop-color="#c9a98c"/><stop offset="1" stop-color="#5e432f"/></linearGradient>
<radialGradient id="lzr" cx=".35" cy=".3" r=".75"><stop offset="0" stop-color="#ecd8c2"/><stop offset=".5" stop-color="#b6957a"/><stop offset="1" stop-color="#523826"/></radialGradient>
<filter id="lds" x="-30%" y="-30%" width="170%" height="170%"><feGaussianBlur in="SourceAlpha" stdDeviation="1"/><feOffset dx="1.5" dy="1.8"/><feComponentTransfer><feFuncA type="linear" slope=".7"/></feComponentTransfer><feMerge><feMergeNode/><feMergeNode in="SourceGraphic"/></feMerge></filter>
<filter id="glow" x="-60%" y="-60%" width="220%" height="220%"><feGaussianBlur in="SourceAlpha" stdDeviation="2.2" result="b"/><feFlood flood-color="#f4f4c8"/><feComposite operator="in" in2="b"/><feComponentTransfer><feFuncA type="linear" slope="1.3"/></feComponentTransfer><feMerge><feMergeNode/><feMergeNode in="SourceGraphic"/></feMerge></filter>
</defs><g filter="url(#glow)"><path d="M1575 0L1592.6 0L1590.5 9L1588.3 15.8L1586.6 15.2L1587.5 9.5L1584 13L1580.3 21L1578.3 20.4L1581.3 12.5L1577.8 16L1574.8 19.8L1573.2 18.8L1576.6 12.5L1579 9L1574 12L1570.6 15L1569.6 13.6L1573 9.6L1577 6L1572 7.2L1570 7.5L1569.8 6L1574 3.5Z" fill="#fff"/></g><path d="M1630.5 0L1620.5 8.5C1618 6 1612.5 5 1608.2 8C1605 10.5 1603.8 14 1604.5 16.5L1609.5 11.5L1614 14.5L1609 20C1612 21 1616.5 20.5 1619 17.5C1621 15.5 1621 13 1620.5 11.5L1633 2" fill="none" stroke="#b2bac9" stroke-width="1.6" stroke-linejoin="round"/><path d="M1639.5 19.8L1645 7.5L1654 15L1639.5 19.8ZM1645 7.5L1652 0M1654 15L1668 1.5M1649.5 11.2L1661 0M1645 7.5C1647 8 1648 9.5 1649.5 11.2C1651 12 1652.5 13.5 1654 15" fill="none" stroke="#b2bac9" stroke-width="1.6" stroke-linejoin="round"/><path d="M1639.5 19.8L1642 14.5L1645.5 17.8Z" fill="#b2bac9"/><path d="M1679 20C1681 14.5 1685 10 1689 8.5L1691 11C1689 15 1684.5 18 1679 20ZM1690 9.8L1698.5 0M1692 10L1701 1" fill="none" stroke="#b2bac9" stroke-width="1.6" stroke-linejoin="round"/><path d="M1712.5 8.8L1722 0M1724.8 20.8L1741 2.5M1712.5 8.8L1724.8 20.8M1716 5.6L1728 17.3M1722.5 11.8L1730 4.5M1728.5 6L1733.5 11" fill="none" stroke="#b2bac9" stroke-width="1.5"/><path d="M1714 7.2L1726.4 19.2M1719.5 2.5L1738.5 5" stroke="#b2bac9" stroke-width="1" stroke-dasharray="1 1.3" fill="none"/><path d="M1843 12.6C1846.5 8.6 1854 8.6 1857.8 12.6C1854 16.6 1846.5 16.6 1843 12.6Z" fill="none" stroke="#d7ecfb" stroke-width="1.4"/><circle cx="1850.4" cy="12.6" r="2.2" fill="#d7ecfb"/><rect x="1869.3" y="8.8" width="10" height="7.6" fill="none" stroke="#fff" stroke-width="1.3"/><rect x="1869.3" y="8.8" width="10" height="2.2" fill="#fff"/><path d="M1894.5 8.8L1902 16.4M1902 8.8L1894.5 16.4" stroke="#fff" stroke-width="2.2" style="filter:drop-shadow(1px 1px 0 #1a2236)"/></svg><svg class="abs" style="left:1530px;top:60px" width="388" height="24" viewBox="1530 60 388 24"><defs>
<linearGradient id="lz" x1="0" y1="0" x2="1" y2="1"><stop offset="0" stop-color="#e6ceb4"/><stop offset=".45" stop-color="#b59377"/><stop offset="1" stop-color="#553a28"/></linearGradient>
<linearGradient id="lzh" x1="0" y1="0" x2="1" y2="0"><stop offset="0" stop-color="#e8d0b6"/><stop offset=".45" stop-color="#c9a98c"/><stop offset="1" stop-color="#5e432f"/></linearGradient>
<radialGradient id="lzr" cx=".35" cy=".3" r=".75"><stop offset="0" stop-color="#ecd8c2"/><stop offset=".5" stop-color="#b6957a"/><stop offset="1" stop-color="#523826"/></radialGradient>
<filter id="lds" x="-30%" y="-30%" width="170%" height="170%"><feGaussianBlur in="SourceAlpha" stdDeviation="1"/><feOffset dx="1.5" dy="1.8"/><feComponentTransfer><feFuncA type="linear" slope=".7"/></feComponentTransfer><feMerge><feMergeNode/><feMergeNode in="SourceGraphic"/></feMerge></filter>
<filter id="glow" x="-60%" y="-60%" width="220%" height="220%"><feGaussianBlur in="SourceAlpha" stdDeviation="2.2" result="b"/><feFlood flood-color="#f4f4c8"/><feComposite operator="in" in2="b"/><feComponentTransfer><feFuncA type="linear" slope="1.3"/></feComponentTransfer><feMerge><feMergeNode/><feMergeNode in="SourceGraphic"/></feMerge></filter>
</defs><polygon points="1545.5,69.3 1542.6,71.0 1539.7,69.3 1539.7,65.9 1542.6,64.2 1545.5,65.9" fill="#6d7688"/><polygon points="1549.9,74.8 1546.4,76.8 1542.9,74.8 1542.9,70.8 1546.4,68.8 1549.9,70.8" fill="#7a8496"/><path d="M1539.5 72.5A8 8 0 0 0 1546 79.2M1552 67.5A8 8 0 0 1 1550 77.5" stroke="#6d7688" stroke-width="1.2" stroke-dasharray="2 1.6" fill="none"/><rect x="1561" y="65.3" width="7" height="4.7" fill="#8b94a5"/><path d="M1564.5 70V73.8" stroke="#8b94a5" stroke-width="1.2"/><rect x="1561.6" y="74.2" width="5.8" height="3.6" fill="none" stroke="#8b94a5" stroke-width="1.2"/><circle cx="1585" cy="75.3" r="3.3" fill="#8b94a5"/><path d="M1578 79L1580.5 72.5C1581.5 70.5 1583 70 1584 70.8M1592.5 79L1590 72.5C1589 70.5 1587.5 70 1586.2 70.8" stroke="#8b94a5" stroke-width="1.4" fill="none"/><path d="M1578 79L1581 73.5L1582 79ZM1592.5 79L1589.5 73.5L1588.5 79Z" fill="#8b94a5"/><polygon points="1612.1,74.8 1605.5,78.6 1598.9,74.8 1598.9,67.2 1605.5,63.4 1612.1,67.2" fill="none" stroke="#e6eaf0" stroke-width="1.3" stroke-dasharray="2.2 1"/><path d="M1605.5 65V77.5M1600 71H1611M1600.5 66L1603.5 69M1610.5 66L1607.5 69M1600.5 76L1603.5 73M1610.5 76L1607.5 73" stroke="#e6eaf0" stroke-width="1.2"/><path d="M1603.3 64.8L1605.5 62.5L1607.7 64.8Z" fill="#e6eaf0"/><g filter="url(#glow)"><rect x="1626.1" y="66.2" width="11" height="10.7" fill="#fff"/></g><rect x="1641.8" y="66.2" width="11.2" height="4.4" fill="#8b94a5"/><rect x="1641.8" y="72.5" width="11.2" height="4.4" fill="#8b94a5"/><rect x="1658" y="66.2" width="4.9" height="4.4" fill="#8b94a5"/><rect x="1664.2" y="66.2" width="4.9" height="4.4" fill="#8b94a5"/><rect x="1658" y="72.5" width="11.1" height="4.4" fill="#8b94a5"/><rect x="1674" y="66.2" width="4.9" height="4.4" fill="#8b94a5"/><rect x="1680.1" y="66.2" width="4.9" height="4.4" fill="#8b94a5"/><rect x="1674" y="72.5" width="4.9" height="4.4" fill="#8b94a5"/><rect x="1680.1" y="72.5" width="4.9" height="4.4" fill="#8b94a5"/><path d="M1690.2 66.2H1695V72.5H1701.2V76.9H1690.2Z" fill="#8b94a5"/><rect x="1696.3" y="66.2" width="4.9" height="4.4" fill="#8b94a5"/><path d="M1722 63.4L1729.8 66.2L1728.6 74.5L1722 79.2L1715.4 74.5L1714.2 66.2Z" fill="none" stroke="#e6eaf0" stroke-width="1.2" stroke-linejoin="round"/><path d="M1722 63.4V70.2M1722 70.2L1728.6 74.5M1722 70.2L1715.4 74.5" stroke="#e6eaf0" stroke-width="1.2" fill="none"/><path d="M1724.5 64.5L1724.3 71.8M1727.3 65.3L1726.8 73.3M1722 66.8L1729.5 68.8" stroke="#e6eaf0" stroke-width="1.4"/><path d="M1741.8 63.4L1749.6 66.2L1748.3999999999999 74.5L1741.8 79.2L1735.2 74.5L1734.0 66.2Z" fill="none" stroke="#e6eaf0" stroke-width="1.2" stroke-linejoin="round"/><path d="M1741.8 63.4V70.2M1741.8 70.2L1748.3999999999999 74.5M1741.8 70.2L1735.2 74.5" stroke="#e6eaf0" stroke-width="1.2" fill="none"/><path d="M1739.3 64.5L1739.5 71.8M1736.5 65.3L1737 73.3M1741.8 66.8L1734.3 68.8" stroke="#e6eaf0" stroke-width="1.4"/><path d="M1762 63.4L1769.8 66.2L1768.6 74.5L1762 79.2L1755.4 74.5L1754.2 66.2Z" fill="none" stroke="#e6eaf0" stroke-width="1.2" stroke-linejoin="round"/><path d="M1762 63.4V70.2M1762 70.2L1768.6 74.5M1762 70.2L1755.4 74.5" stroke="#e6eaf0" stroke-width="1.2" fill="none"/><path d="M1758.2 72.4L1762 75L1765.8 72.4M1755.8 74.3L1762 77.3" stroke="#e6eaf0" stroke-width="1.4" fill="none"/><circle cx="1789" cy="71" r="7.9" fill="none" stroke="#a5adbb" stroke-width="1.2"/><path d="M1789 65L1793 71H1790.3V76.5H1787.7V71H1785Z" fill="#a5adbb"/><polygon points="1815.9,74.5 1809.8,78.0 1803.7,74.5 1803.7,67.5 1809.8,64.0 1815.9,67.5" fill="none" stroke="#8b94a5" stroke-width="1.3" stroke-dasharray="2.6 2.2"/><path d="M1808.3 69.5L1809.8 71.2L1811.3 69.5M1809.8 71.2V73.5" stroke="#8b94a5" stroke-width="1" fill="none"/><path d="M1807.6 78.3L1809.8 80.3L1812 78.3Z" fill="#8b94a5"/><path d="M1831 63.4L1838.7 66.5V75.5L1831 79.6L1823.3 75.5V66.5Z" fill="none" stroke="#a5adbb" stroke-width="1.2" stroke-linejoin="round"/><path d="M1823.3 66.5L1831 69.8L1838.7 66.5M1831 69.8V79.6" stroke="#a5adbb" stroke-width="1.2" fill="none"/><path d="M1852 63.3L1859.9 66.5L1852 69.8L1844.1 66.5Z" fill="#8b94a5"/><path d="M1844.1 66.5L1852 69.8V79.5L1844.1 75.5Z" fill="#7b8496"/><path d="M1859.9 66.5L1852 69.8V79.5L1859.9 75.5Z" fill="#636c7e"/><radialGradient id="sph1" cx=".4" cy=".35" r=".7"><stop offset="0" stop-color="#ffffff"/><stop offset=".6" stop-color="#e6e6d2"/><stop offset="1" stop-color="#9a9a84"/></radialGradient><g filter="url(#glow)"><circle cx="1872.9" cy="70.7" r="7.7" fill="url(#sph1)"/></g><radialGradient id="sph2" cx=".4" cy=".35" r=".75"><stop offset="0" stop-color="#98a1b1"/><stop offset=".7" stop-color="#747d8e"/><stop offset="1" stop-color="#48505f"/></radialGradient><circle cx="1893.9" cy="71" r="7.8" fill="url(#sph2)"/><path d="M1887.5 68C1891 65.5 1896 66.5 1900.5 68.5M1887 73C1891 70 1896 71.5 1901 73.5" stroke="#a2aaba" stroke-width="1.3" fill="none" opacity=".7"/></svg><div class="abs" style="left:1919px;top:0;width:1px;height:1039px;background:#0a1120"></div><div class="abs" style="left:1922px;top:0;width:342px;height:1031px;background:#717d92;border:1px solid #0a1120;border-width:0 1px 1px 1px;border-radius:9px 9px 0 0"></div><div class="abs" style="left:1922px;top:0;width:342px;height:23px;background:#232e43;border-radius:9px 9px 0 0;border-left:1px solid #0a1120"></div><div class="abs" style="left:1922px;top:23px;width:342px;height:1px;background:#05080f"></div><div class="t title" style="left:1947px;top:5px">Properties</div><div class="abs" style="left:1928px;top:61px;width:47px;height:19px;background:#99a4b7;border:1px solid #070c18;border-bottom:none;border-radius:4px 4px 0 0"></div><div class="abs" style="left:1928px;top:78px;width:328px;height:441px;background:#99a4b7;border:1px solid #070c18"></div><div class="abs" style="left:1929px;top:78px;width:45px;height:2px;background:#99a4b7"></div><div class="abs" style="left:2238px;top:33px;width:17px;height:17px;border:1px solid #0d1638;border-radius:3px;background:linear-gradient(#6f9bcb,#3f6ea6 55%,#2d5a92);box-shadow:1px 1px 1px rgba(0,0,0,.4)"></div><svg class="abs" style="left:2238px;top:33px" width="17" height="17"><path d="M3.5 6.5H8V3.5L13.5 8.5L8 13.5V10.5H3.5Z" fill="#000"/></svg><div class="abs" style="left:2251px;top:79px;width:4px;height:439px;background:linear-gradient(90deg,#5a5f66,#fff 40%,#fff 60%,#6a6f78);"></div><div class="abs" style="left:2251px;top:79px;width:4px;height:10px;background:#e3d94a;border:1px solid #5a5410;border-top:none"></div><div class="abs" style="left:2251px;top:508px;width:4px;height:10px;background:#e3d94a;border:1px solid #5a5410"></div><div class="abs" style="left:1928px;top:528px;width:328px;height:1px;background:#0a1120;"></div><div class="abs" style="left:1928px;top:529px;width:328px;height:1px;background:#a3aec0;"></div><div class="abs" style="left:2070px;top:523px;width:50px;height:11px;border:1px solid #0d1b4a;border-radius:6px;background:linear-gradient(#6f9bcb,#3f6ea6 60%,#2f5c94)"></div><div class="abs" style="left:2090px;top:528px;width:10px;height:1px;background:#e8eef6;box-shadow:0 1px 0 #1a2f5a"></div><div class="abs" style="left:1928px;top:557px;width:328px;height:466px;background:#99a4b7;border:1px solid #070c18"></div><div class="abs" style="left:1928px;top:541px;width:57px;height:17px;background:#99a4b7;border:1px solid #070c18;border-bottom:none;border-radius:4px 4px 0 0"></div><div class="tab" style="left:1934px;top:547.3px;color:#0d1320">Instances</div><div class="abs" style="left:1984px;top:541px;width:46px;height:16px;background:#717d92;border:1px solid #070c18;border-bottom:none;border-radius:4px 4px 0 0"></div><div class="tab" style="left:1990px;top:547.3px;color:#fff">Objects</div><div class="abs" style="left:2029px;top:541px;width:50px;height:16px;background:#717d92;border:1px solid #070c18;border-bottom:none;border-radius:4px 4px 0 0"></div><div class="tab" style="left:2035px;top:547.3px;color:#fff">Shaders</div><div class="abs" style="left:2078px;top:541px;width:46px;height:16px;background:#717d92;border:1px solid #070c18;border-bottom:none;border-radius:4px 4px 0 0"></div><div class="tab" style="left:2084px;top:547.3px;color:#fff">Sounds</div><div class="abs" style="left:2123px;top:541px;width:46px;height:16px;background:#717d92;border:1px solid #070c18;border-bottom:none;border-radius:4px 4px 0 0"></div><div class="tab" style="left:2129px;top:547.3px;color:#fff">Clips</div><div class="t tr" style="left:1961px;top:569.3px">Find:</div><div class="abs" style="left:1984px;top:563px;width:184px;height:20px;background:#fff;border:1px solid #4a2a12;border-radius:1px"></div><div class="abs" style="left:2173px;top:565px;width:80px;height:16px;border:1px solid #0d1b4a;border-radius:3px;background:linear-gradient(#6f9bcb,#4574ac 55%,#3a669e)"></div><div class="t" style="left:2176px;top:571px;font-size:10px;color:#fff">All</div><svg class="abs" style="left:2242px;top:568px" width="8" height="10"><path d="M1 1L4 4L7 1M1 5L4 8L7 5" stroke="#0a1020" stroke-width="1.2" fill="none"/></svg><div class="abs" style="left:1930px;top:589px;width:322px;height:1px;background:#b7c3d5;"></div><div class="t" style="left:1934px;top:590.2px;font-size:14px;color:#0d1320">Scene</div><div class="abs" style="left:0;top:0;width:2637px;height:1039px;clip-path:inset(589px 385px 24px 1929px)"><div class="abs" style="left:1930px;top:604px;width:322px;height:1px;background:#7c889d;"></div><div class="abs" style="left:1930px;top:605px;width:322px;height:1px;background:#b7c3d5;"></div><div class="abs" style="left:1930px;top:620px;width:322px;height:1px;background:#7c889d;"></div><div class="abs" style="left:1930px;top:621px;width:322px;height:1px;background:#b7c3d5;"></div><div class="abs" style="left:1930px;top:636px;width:322px;height:1px;background:#7c889d;"></div><div class="abs" style="left:1930px;top:637px;width:322px;height:1px;background:#b7c3d5;"></div><div class="abs" style="left:1930px;top:652px;width:322px;height:1px;background:#7c889d;"></div><div class="abs" style="left:1930px;top:653px;width:322px;height:1px;background:#b7c3d5;"></div><div class="abs" style="left:1930px;top:668px;width:322px;height:1px;background:#7c889d;"></div><div class="abs" style="left:1930px;top:669px;width:322px;height:1px;background:#b7c3d5;"></div><div class="abs" style="left:1930px;top:684px;width:322px;height:1px;background:#7c889d;"></div><div class="abs" style="left:1930px;top:685px;width:322px;height:1px;background:#b7c3d5;"></div><div class="abs" style="left:1930px;top:700px;width:322px;height:1px;background:#7c889d;"></div><div class="abs" style="left:1930px;top:701px;width:322px;height:1px;background:#b7c3d5;"></div><div class="abs" style="left:1930px;top:716px;width:322px;height:1px;background:#7c889d;"></div><div class="abs" style="left:1930px;top:717px;width:322px;height:1px;background:#b7c3d5;"></div><div class="abs" style="left:1930px;top:732px;width:322px;height:1px;background:#7c889d;"></div><div class="abs" style="left:1930px;top:733px;width:322px;height:1px;background:#b7c3d5;"></div><div class="abs" style="left:1930px;top:748px;width:322px;height:1px;background:#7c889d;"></div><div class="abs" style="left:1930px;top:749px;width:322px;height:1px;background:#b7c3d5;"></div><div class="abs" style="left:1930px;top:764px;width:322px;height:1px;background:#7c889d;"></div><div class="abs" style="left:1930px;top:765px;width:322px;height:1px;background:#b7c3d5;"></div><div class="abs" style="left:1930px;top:780px;width:322px;height:1px;background:#7c889d;"></div><div class="abs" style="left:1930px;top:781px;width:322px;height:1px;background:#b7c3d5;"></div><div class="abs" style="left:1930px;top:796px;width:322px;height:1px;background:#7c889d;"></div><div class="abs" style="left:1930px;top:797px;width:322px;height:1px;background:#b7c3d5;"></div><div class="abs" style="left:1930px;top:812px;width:322px;height:1px;background:#7c889d;"></div><div class="abs" style="left:1930px;top:813px;width:322px;height:1px;background:#b7c3d5;"></div><div class="abs" style="left:1930px;top:828px;width:322px;height:1px;background:#7c889d;"></div><div class="abs" style="left:1930px;top:829px;width:322px;height:1px;background:#b7c3d5;"></div><div class="abs" style="left:1930px;top:844px;width:322px;height:1px;background:#7c889d;"></div><div class="abs" style="left:1930px;top:845px;width:322px;height:1px;background:#b7c3d5;"></div><div class="abs" style="left:1930px;top:860px;width:322px;height:1px;background:#7c889d;"></div><div class="abs" style="left:1930px;top:861px;width:322px;height:1px;background:#b7c3d5;"></div><div class="abs" style="left:1930px;top:876px;width:322px;height:1px;background:#7c889d;"></div><div class="abs" style="left:1930px;top:877px;width:322px;height:1px;background:#b7c3d5;"></div><div class="abs" style="left:1930px;top:892px;width:322px;height:1px;background:#7c889d;"></div><div class="abs" style="left:1930px;top:893px;width:322px;height:1px;background:#b7c3d5;"></div><div class="abs" style="left:1930px;top:908px;width:322px;height:1px;background:#7c889d;"></div><div class="abs" style="left:1930px;top:909px;width:322px;height:1px;background:#b7c3d5;"></div><div class="abs" style="left:1930px;top:924px;width:322px;height:1px;background:#7c889d;"></div><div class="abs" style="left:1930px;top:925px;width:322px;height:1px;background:#b7c3d5;"></div><div class="abs" style="left:1930px;top:940px;width:322px;height:1px;background:#7c889d;"></div><div class="abs" style="left:1930px;top:941px;width:322px;height:1px;background:#b7c3d5;"></div><div class="abs" style="left:1930px;top:956px;width:322px;height:1px;background:#7c889d;"></div><div class="abs" style="left:1930px;top:957px;width:322px;height:1px;background:#b7c3d5;"></div><div class="abs" style="left:1930px;top:972px;width:322px;height:1px;background:#7c889d;"></div><div class="abs" style="left:1930px;top:973px;width:322px;height:1px;background:#b7c3d5;"></div><div class="abs" style="left:1930px;top:988px;width:322px;height:1px;background:#7c889d;"></div><div class="abs" style="left:1930px;top:989px;width:322px;height:1px;background:#b7c3d5;"></div><div class="abs" style="left:1930px;top:1004px;width:322px;height:1px;background:#7c889d;"></div><div class="abs" style="left:1930px;top:1005px;width:322px;height:1px;background:#b7c3d5;"></div><div class="abs" style="left:1930px;top:1020px;width:322px;height:1px;background:#7c889d;"></div><div class="abs" style="left:1930px;top:1021px;width:322px;height:1px;background:#b7c3d5;"></div><div class="t tr" style="left:1946.0px;top:608.3px">Genesis 3 Female</div><div class="t tr" style="left:1960.0px;top:624.3px">Actor</div><div class="t tr" style="left:1960.0px;top:640.3px">Hip</div><div class="t tr" style="left:1974.0px;top:656.3px">Pelvis</div><div class="t tr" style="left:1988.0px;top:672.3px">Left Thigh Bend</div><div class="t tr" style="left:2002.0px;top:688.3px">Left Thigh Twist</div><div class="t tr" style="left:2016.0px;top:704.3px">Left Shin</div><div class="t tr" style="left:2030.0px;top:720.3px">Left Foot</div><div class="t tr" style="left:2044.0px;top:736.3px">Left Metatarsals</div><div class="t tr" style="left:2058.0px;top:752.3px">Left Toes</div><div class="t tr" style="left:2058.0px;top:768.3px">Left Small Toe 4</div><div class="t tr" style="left:2072.0px;top:784.3px">Left Small Toe 4_2</div><div class="t tr" style="left:2058.0px;top:800.3px">Left Small Toe 3</div><div class="t tr" style="left:2072.0px;top:816.3px">Left Small Toe 3_2</div><div class="t tr" style="left:2058.0px;top:832.3px">Left Small Toe 2</div><div class="t tr" style="left:2072.0px;top:848.3px">Left Small Toe 2_2</div><div class="t tr" style="left:2058.0px;top:864.3px">Left Small Toe 1</div><div class="t tr" style="left:2072.0px;top:880.3px">Left Small Toe 1_2</div><div class="t tr" style="left:2058.0px;top:896.3px">Left Big Toe</div><div class="t tr" style="left:2072.0px;top:912.3px">Left Big Toe_2</div><div class="t tr" style="left:2044.0px;top:928.3px">Left Heel</div><div class="t tr" style="left:1988.0px;top:944.3px">Right Thigh Bend</div><div class="t tr" style="left:2002.0px;top:960.3px">Right Thigh Twist</div><div class="t tr" style="left:2016.0px;top:976.3px">Right Shin</div><div class="t tr" style="left:2030.0px;top:992.3px">Right Foot</div><div class="t tr" style="left:2044.0px;top:1008.3px">Right Metatarsals</div><svg class="abs" style="left:0;top:0" width="2637" height="1039"><path d="M1934 610.0h10l-5 5.2z" fill="#fff"/><path d="M1948 642.0h10l-5 5.2z" fill="#fff"/><path d="M1962 658.0h10l-5 5.2z" fill="#fff"/><path d="M1976 674.0h10l-5 5.2z" fill="#fff"/><path d="M1990 690.0h10l-5 5.2z" fill="#fff"/><path d="M2004 706.0h10l-5 5.2z" fill="#fff"/><path d="M2018 722.0h10l-5 5.2z" fill="#fff"/><path d="M2032 738.0h10l-5 5.2z" fill="#fff"/><path d="M2046 770.0h10l-5 5.2z" fill="#fff"/><path d="M2046 802.0h10l-5 5.2z" fill="#fff"/><path d="M2046 834.0h10l-5 5.2z" fill="#fff"/><path d="M2046 866.0h10l-5 5.2z" fill="#fff"/><path d="M2046 898.0h10l-5 5.2z" fill="#fff"/><path d="M1976 946.0h10l-5 5.2z" fill="#fff"/><path d="M1990 962.0h10l-5 5.2z" fill="#fff"/><path d="M2004 978.0h10l-5 5.2z" fill="#fff"/><path d="M2018 994.0h10l-5 5.2z" fill="#fff"/><path d="M2032 1010.0h10l-5 5.2z" fill="#fff"/><path d="M1940.5 618.0V1030" stroke="#000" stroke-width="1.2" fill="none"/><path d="M1940.5 629.2H1955.0" stroke="#000" stroke-width="1.2" fill="none"/><path d="M1940.5 645.2H1945.5" stroke="#000" stroke-width="1.2" fill="none"/><path d="M1954.5 650.0V1030" stroke="#000" stroke-width="1.2" fill="none"/><path d="M1954.5 661.2H1959.5" stroke="#000" stroke-width="1.2" fill="none"/><path d="M1968.5 666.0V948.5" stroke="#000" stroke-width="1.2" fill="none"/><path d="M1968.5 677.2H1973.5" stroke="#000" stroke-width="1.2" fill="none"/><path d="M1968.5 949.2H1973.5" stroke="#000" stroke-width="1.2" fill="none"/><path d="M1982.5 682.0V692.5" stroke="#000" stroke-width="1.2" fill="none"/><path d="M1982.5 693.2H1987.5" stroke="#000" stroke-width="1.2" fill="none"/><path d="M1996.5 698.0V708.5" stroke="#000" stroke-width="1.2" fill="none"/><path d="M1996.5 709.2H2001.5" stroke="#000" stroke-width="1.2" fill="none"/><path d="M2010.5 714.0V724.5" stroke="#000" stroke-width="1.2" fill="none"/><path d="M2010.5 725.2H2015.5" stroke="#000" stroke-width="1.2" fill="none"/><path d="M2024.5 730.0V932.5" stroke="#000" stroke-width="1.2" fill="none"/><path d="M2024.5 741.2H2029.5" stroke="#000" stroke-width="1.2" fill="none"/><path d="M2024.5 933.2H2039.0" stroke="#000" stroke-width="1.2" fill="none"/><path d="M2038.5 746.0V900.5" stroke="#000" stroke-width="1.2" fill="none"/><path d="M2038.5 757.2H2053.0" stroke="#000" stroke-width="1.2" fill="none"/><path d="M2038.5 773.2H2043.5" stroke="#000" stroke-width="1.2" fill="none"/><path d="M2038.5 805.2H2043.5" stroke="#000" stroke-width="1.2" fill="none"/><path d="M2038.5 837.2H2043.5" stroke="#000" stroke-width="1.2" fill="none"/><path d="M2038.5 869.2H2043.5" stroke="#000" stroke-width="1.2" fill="none"/><path d="M2038.5 901.2H2043.5" stroke="#000" stroke-width="1.2" fill="none"/><path d="M2052.5 778.0V788.5" stroke="#000" stroke-width="1.2" fill="none"/><path d="M2052.5 789.2H2067.0" stroke="#000" stroke-width="1.2" fill="none"/><path d="M2052.5 810.0V820.5" stroke="#000" stroke-width="1.2" fill="none"/><path d="M2052.5 821.2H2067.0" stroke="#000" stroke-width="1.2" fill="none"/><path d="M2052.5 842.0V852.5" stroke="#000" stroke-width="1.2" fill="none"/><path d="M2052.5 853.2H2067.0" stroke="#000" stroke-width="1.2" fill="none"/><path d="M2052.5 874.0V884.5" stroke="#000" stroke-width="1.2" fill="none"/><path d="M2052.5 885.2H2067.0" stroke="#000" stroke-width="1.2" fill="none"/><path d="M2052.5 906.0V916.5" stroke="#000" stroke-width="1.2" fill="none"/><path d="M2052.5 917.2H2067.0" stroke="#000" stroke-width="1.2" fill="none"/><path d="M1982.5 954.0V964.5" stroke="#000" stroke-width="1.2" fill="none"/><path d="M1982.5 965.2H1987.5" stroke="#000" stroke-width="1.2" fill="none"/><path d="M1996.5 970.0V980.5" stroke="#000" stroke-width="1.2" fill="none"/><path d="M1996.5 981.2H2001.5" stroke="#000" stroke-width="1.2" fill="none"/><path d="M2010.5 986.0V996.5" stroke="#000" stroke-width="1.2" fill="none"/><path d="M2010.5 997.2H2015.5" stroke="#000" stroke-width="1.2" fill="none"/><path d="M2024.5 1002.0V1012.5" stroke="#000" stroke-width="1.2" fill="none"/><path d="M2024.5 1013.2H2029.5" stroke="#000" stroke-width="1.2" fill="none"/></svg></div><div class="abs" style="left:2252px;top:589px;width:4px;height:426px;background:linear-gradient(90deg,#5a5f66,#fff 40%,#fff 60%,#6a6f78);"></div><div class="abs" style="left:2251px;top:588px;width:6px;height:11px;background:#e3d94a;border:1px solid #5a5410"></div><div class="abs" style="left:2251px;top:1005px;width:6px;height:10px;background:#e3d94a;border:1px solid #5a5410"></div><div class="abs" style="left:2251px;top:600px;width:8px;height:51px;border:1px solid #0d1b4a;border-radius:4px;background:linear-gradient(90deg,#7aa5d2,#3f6ea6 60%,#2f5c94)"></div><div class="abs" style="left:1929px;top:1016px;width:324px;height:6px;background:linear-gradient(#5a5f66,#fff 35%,#fff 60%,#6a6f78);"></div><div class="abs" style="left:1929px;top:1016px;width:12px;height:6px;background:#e3d94a;border:1px solid #5a5410"></div><div class="abs" style="left:2241px;top:1016px;width:12px;height:6px;background:#e3d94a;border:1px solid #5a5410"></div><div class="abs" style="left:1941px;top:1015px;width:227px;height:8px;border:1px solid #0d1b4a;border-radius:4px;background:linear-gradient(#7aa5d2,#3f6ea6 60%,#2f5c94)"></div><div class="abs" style="left:2265px;top:0;width:380px;height:1030px;background:#717d92;border:1px solid #0a1120;border-radius:9px 0 0 0"></div><div class="abs" style="left:2265px;top:0;width:380px;height:22px;background:#232e43;border-radius:9px 0 0 0;border-left:1px solid #0a1120"></div><div class="abs" style="left:2265px;top:22px;width:380px;height:1px;background:#05080f"></div><div class="t title" style="left:2291px;top:4px;color:#e9edf3">Sequencer</div><div class="abs" style="left:2271px;top:29px;width:61px;height:16px;border:1px solid #0d1b4a;background:linear-gradient(#79a6d6,#4677b0 50%,#315f98)"></div><div class="t" style="left:2284px;top:33.3px;font-size:10px;color:#fff">Animate</div><div class="abs" style="left:2340px;top:29px;width:18px;height:16px;border:1px solid #0d1b4a;background:linear-gradient(#79a6d6,#4677b0 50%,#315f98)"></div><svg class="abs" style="left:2340px;top:29px" width="18" height="16" viewBox="0 0 18 16"><rect x="4" y="4.5" width="1.6" height="7" fill="#fff"/><path d="M13 4.5v7L7 8z" fill="#fff"/></svg><div class="abs" style="left:2357.2px;top:29px;width:18px;height:16px;border:1px solid #0d1b4a;background:linear-gradient(#79a6d6,#4677b0 50%,#315f98)"></div><svg class="abs" style="left:2357.2px;top:29px" width="18" height="16" viewBox="0 0 18 16"><path d="M9 4.5v7L3.5 8z M14.5 4.5v7L9 8z" fill="#fff"/></svg><div class="abs" style="left:2374.3999999999996px;top:29px;width:18px;height:16px;border:1px solid #0d1b4a;background:linear-gradient(#79a6d6,#4677b0 50%,#315f98)"></div><svg class="abs" style="left:2374.3999999999996px;top:29px" width="18" height="16" viewBox="0 0 18 16"><rect x="5" y="4.5" width="8" height="7" fill="#fff"/></svg><div class="abs" style="left:2391.5999999999995px;top:29px;width:18px;height:16px;border:1px solid #0d1b4a;background:linear-gradient(#79a6d6,#4677b0 50%,#315f98)"></div><svg class="abs" style="left:2391.5999999999995px;top:29px" width="18" height="16" viewBox="0 0 18 16"><path d="M6 4v8l7-4z" fill="#fff"/></svg><div class="abs" style="left:2408.7999999999993px;top:29px;width:18px;height:16px;border:1px solid #0d1b4a;background:linear-gradient(#79a6d6,#4677b0 50%,#315f98)"></div><svg class="abs" style="left:2408.7999999999993px;top:29px" width="18" height="16" viewBox="0 0 18 16"><path d="M3.5 4.5v7L9 8z M9 4.5v7L14.5 8z" fill="#fff"/></svg><div class="abs" style="left:2425.999999999999px;top:29px;width:18px;height:16px;border:1px solid #0d1b4a;background:linear-gradient(#79a6d6,#4677b0 50%,#315f98)"></div><svg class="abs" style="left:2425.999999999999px;top:29px" width="18" height="16" viewBox="0 0 18 16"><path d="M5 4.5v7L11 8z" fill="#fff"/><rect x="12.4" y="4.5" width="1.6" height="7" fill="#fff"/></svg><div class="abs" style="left:2451px;top:29px;width:18px;height:16px;border:1px solid #0d1b4a;background:linear-gradient(#79a6d6,#4677b0 50%,#315f98)"></div><svg class="abs" style="left:2451px;top:29px" width="18" height="16" viewBox="0 0 18 16"><path d="M4 6.5h10v5.5H4z" fill="none" stroke="#fff" stroke-width="1.8"/><path d="M8 2.5l4 2.2-4 2.2z" fill="#fff"/></svg><div class="abs" style="left:2477px;top:29px;width:18px;height:16px;border:1px solid #0d1b4a;background:linear-gradient(#79a6d6,#4677b0 50%,#315f98)"></div><svg class="abs" style="left:2477px;top:29px" width="18" height="16" viewBox="0 0 18 16"><path d="M12 4v8L5.5 8z" fill="#fff"/></svg><div class="abs" style="left:2494.2px;top:29px;width:18px;height:16px;border:1px solid #0d1b4a;background:linear-gradient(#79a6d6,#4677b0 50%,#315f98)"></div><svg class="abs" style="left:2494.2px;top:29px" width="18" height="16" viewBox="0 0 18 16"><circle cx="5.5" cy="7" r="2.3" fill="none" stroke="#fff" stroke-width="1.5"/><path d="M7.5 7h7v3M12 7v2.5" stroke="#fff" stroke-width="1.5" fill="none"/></svg><div class="abs" style="left:2511.3999999999996px;top:29px;width:18px;height:16px;border:1px solid #0d1b4a;background:linear-gradient(#79a6d6,#4677b0 50%,#315f98)"></div><svg class="abs" style="left:2511.3999999999996px;top:29px" width="18" height="16" viewBox="0 0 18 16"><path d="M4 5h10M7 5V3.5h4V5M5.2 6.5l.8 6.5h6l.8-6.5zM7.5 7.5v4.5M9 7.5v4.5M10.5 7.5v4.5" stroke="#fff" stroke-width="1.1" fill="none"/></svg><div class="abs" style="left:2528.5999999999995px;top:29px;width:18px;height:16px;border:1px solid #0d1b4a;background:linear-gradient(#79a6d6,#4677b0 50%,#315f98)"></div><svg class="abs" style="left:2528.5999999999995px;top:29px" width="18" height="16" viewBox="0 0 18 16"><path d="M6 4v8l6.5-4z" fill="#fff"/></svg><div class="abs" style="left:2557px;top:33px;width:90px;height:7px;border-radius:4px;background:linear-gradient(#3f4656,#c5cede 45%,#fff 55%,#8a93a4 80%,#4a5263)"></div><svg class="abs" style="left:2561px;top:33px" width="12" height="7"><path d="M1 6.5L5.5 1l4.5 5.5z" fill="#fff" stroke="#1a2f6a" stroke-width="1"/></svg><div class="abs" style="left:2274px;top:54px;width:18px;height:60px;background:#717d92;border:1px solid #070c18;border-right:none;border-radius:5px 0 0 0"></div><div class="abs" style="left:2274px;top:113px;width:18px;height:51px;background:#99a4b7;border:1px solid #070c18;border-right:none;border-radius:5px 0 0 5px;box-shadow:1px 2px 2px rgba(0,0,0,.35)"></div><div class="abs" style="left:2291px;top:54px;width:360px;height:967px;background:#99a4b7;border:1px solid #070c18;border-right:none"></div><div class="abs" style="left:2291px;top:114px;width:2px;height:49px;background:#99a4b7;"></div><div class="tab" style="left:2284.5px;top:85px;transform:translate(-50%,-50%) rotate(-90deg);transform-origin:center">Sequencer</div><div class="tab" style="left:2284.5px;top:139px;transform:translate(-50%,-50%) rotate(-90deg);color:#0d1320">Browser</div><div class="abs" style="left:2299px;top:78px;width:350px;height:936px;background:#99a4b7;border:1px solid #070c18;border-right:none"></div><div class="abs" style="left:2299.5px;top:63px;width:47.5px;height:15px;background:#717d92;border:1px solid #070c18;border-bottom:none;border-radius:4px 4px 0 0"></div><div class="tab" style="left:2306px;top:68.3px;color:#fff">Scenes</div><div class="abs" style="left:2346px;top:63px;width:46.5px;height:15px;background:#717d92;border:1px solid #070c18;border-bottom:none;border-radius:4px 4px 0 0"></div><div class="tab" style="left:2351px;top:68.3px;color:#fff">Objects</div><div class="abs" style="left:2391.5px;top:63px;width:49.5px;height:15px;background:#717d92;border:1px solid #070c18;border-bottom:none;border-radius:4px 4px 0 0"></div><div class="tab" style="left:2396px;top:68.3px;color:#fff">Shaders</div><div class="abs" style="left:2440px;top:63px;width:45px;height:15px;background:#717d92;border:1px solid #070c18;border-bottom:none;border-radius:4px 4px 0 0"></div><div class="tab" style="left:2444.7px;top:68.3px;color:#fff">Clip</div><div class="abs" style="left:2484px;top:63px;width:45px;height:15px;background:#717d92;border:1px solid #070c18;border-bottom:none;border-radius:4px 4px 0 0"></div><div class="tab" style="left:2489px;top:68.3px;color:#fff">Misc.</div><div class="abs" style="left:2528px;top:63px;width:45px;height:15px;background:#717d92;border:1px solid #070c18;border-bottom:none;border-radius:4px 4px 0 0"></div><div class="tab" style="left:2533px;top:68.3px;color:#fff">Artwork</div><div class="abs" style="left:2572px;top:61px;width:49px;height:18px;background:#99a4b7;border:1px solid #070c18;border-bottom:none;border-radius:4px 4px 0 0"></div><div class="tab" style="left:2578px;top:68.3px;color:#0d1320">Content</div><div class="abs" style="left:2620px;top:63px;width:51px;height:15px;background:#717d92;border:1px solid #070c18;border-bottom:none;border-radius:4px 4px 0 0"></div><div class="tab" style="left:2625px;top:68.3px;color:#fff">Sm</div><div class="abs" style="left:2466px;top:85px;width:5px;height:929px;background:#000;"></div><div class="abs" style="left:2471px;top:85px;width:170px;height:929px;background:#717d92;"></div><div class="abs" style="left:2306px;top:85px;width:158px;height:930px;background:#717d92;border:1px solid #070c18"></div><div class="abs" style="left:2307px;top:86px;width:4px;height:922px;background:#99a4b7;"></div><div class="abs" style="left:0;top:0;width:2637px;height:1039px;clip-path:inset(86px 179px 31px 2311px)"><div class="abs" style="left:2311px;top:78px;width:147px;height:1px;background:#1b2539;"></div><div class="abs" style="left:2311px;top:79px;width:147px;height:1px;background:#8a96aa;"></div><div class="abs" style="left:2311px;top:95px;width:147px;height:1px;background:#1b2539;"></div><div class="abs" style="left:2311px;top:96px;width:147px;height:1px;background:#8a96aa;"></div><div class="abs" style="left:2311px;top:112px;width:147px;height:1px;background:#1b2539;"></div><div class="abs" style="left:2311px;top:113px;width:147px;height:1px;background:#8a96aa;"></div><div class="abs" style="left:2311px;top:129px;width:147px;height:1px;background:#1b2539;"></div><div class="abs" style="left:2311px;top:130px;width:147px;height:1px;background:#8a96aa;"></div><div class="abs" style="left:2311px;top:146px;width:147px;height:1px;background:#1b2539;"></div><div class="abs" style="left:2311px;top:147px;width:147px;height:1px;background:#8a96aa;"></div><div class="abs" style="left:2311px;top:163px;width:147px;height:1px;background:#1b2539;"></div><div class="abs" style="left:2311px;top:164px;width:147px;height:1px;background:#8a96aa;"></div><div class="abs" style="left:2311px;top:180px;width:147px;height:1px;background:#1b2539;"></div><div class="abs" style="left:2311px;top:181px;width:147px;height:1px;background:#8a96aa;"></div><div class="abs" style="left:2311px;top:197px;width:147px;height:1px;background:#1b2539;"></div><div class="abs" style="left:2311px;top:198px;width:147px;height:1px;background:#8a96aa;"></div><div class="abs" style="left:2311px;top:214px;width:147px;height:1px;background:#1b2539;"></div><div class="abs" style="left:2311px;top:215px;width:147px;height:1px;background:#8a96aa;"></div><div class="abs" style="left:2311px;top:231px;width:147px;height:1px;background:#1b2539;"></div><div class="abs" style="left:2311px;top:232px;width:147px;height:1px;background:#8a96aa;"></div><div class="abs" style="left:2311px;top:248px;width:147px;height:1px;background:#1b2539;"></div><div class="abs" style="left:2311px;top:249px;width:147px;height:1px;background:#8a96aa;"></div><div class="abs" style="left:2311px;top:265px;width:147px;height:1px;background:#1b2539;"></div><div class="abs" style="left:2311px;top:266px;width:147px;height:1px;background:#8a96aa;"></div><div class="abs" style="left:2311px;top:282px;width:147px;height:1px;background:#1b2539;"></div><div class="abs" style="left:2311px;top:283px;width:147px;height:1px;background:#8a96aa;"></div><div class="abs" style="left:2311px;top:299px;width:147px;height:1px;background:#1b2539;"></div><div class="abs" style="left:2311px;top:300px;width:147px;height:1px;background:#8a96aa;"></div><div class="abs" style="left:2311px;top:316px;width:147px;height:1px;background:#1b2539;"></div><div class="abs" style="left:2311px;top:317px;width:147px;height:1px;background:#8a96aa;"></div><div class="abs" style="left:2311px;top:333px;width:147px;height:1px;background:#1b2539;"></div><div class="abs" style="left:2311px;top:334px;width:147px;height:1px;background:#8a96aa;"></div><div class="abs" style="left:2311px;top:350px;width:147px;height:1px;background:#1b2539;"></div><div class="abs" style="left:2311px;top:351px;width:147px;height:1px;background:#8a96aa;"></div><div class="abs" style="left:2311px;top:367px;width:147px;height:1px;background:#1b2539;"></div><div class="abs" style="left:2311px;top:368px;width:147px;height:1px;background:#8a96aa;"></div><div class="abs" style="left:2311px;top:384px;width:147px;height:1px;background:#1b2539;"></div><div class="abs" style="left:2311px;top:385px;width:147px;height:1px;background:#8a96aa;"></div><div class="abs" style="left:2311px;top:401px;width:147px;height:1px;background:#1b2539;"></div><div class="abs" style="left:2311px;top:402px;width:147px;height:1px;background:#8a96aa;"></div><div class="abs" style="left:2311px;top:418px;width:147px;height:1px;background:#1b2539;"></div><div class="abs" style="left:2311px;top:419px;width:147px;height:1px;background:#8a96aa;"></div><div class="abs" style="left:2311px;top:435px;width:147px;height:1px;background:#1b2539;"></div><div class="abs" style="left:2311px;top:436px;width:147px;height:1px;background:#8a96aa;"></div><div class="abs" style="left:2311px;top:452px;width:147px;height:1px;background:#1b2539;"></div><div class="abs" style="left:2311px;top:453px;width:147px;height:1px;background:#8a96aa;"></div><div class="abs" style="left:2311px;top:469px;width:147px;height:1px;background:#1b2539;"></div><div class="abs" style="left:2311px;top:470px;width:147px;height:1px;background:#8a96aa;"></div><div class="abs" style="left:2311px;top:486px;width:147px;height:1px;background:#1b2539;"></div><div class="abs" style="left:2311px;top:487px;width:147px;height:1px;background:#8a96aa;"></div><div class="abs" style="left:2311px;top:503px;width:147px;height:1px;background:#1b2539;"></div><div class="abs" style="left:2311px;top:504px;width:147px;height:1px;background:#8a96aa;"></div><div class="abs" style="left:2311px;top:520px;width:147px;height:1px;background:#1b2539;"></div><div class="abs" style="left:2311px;top:521px;width:147px;height:1px;background:#8a96aa;"></div><div class="abs" style="left:2311px;top:537px;width:147px;height:1px;background:#1b2539;"></div><div class="abs" style="left:2311px;top:538px;width:147px;height:1px;background:#8a96aa;"></div><div class="abs" style="left:2311px;top:554px;width:147px;height:1px;background:#1b2539;"></div><div class="abs" style="left:2311px;top:555px;width:147px;height:1px;background:#8a96aa;"></div><div class="abs" style="left:2311px;top:571px;width:147px;height:1px;background:#1b2539;"></div><div class="abs" style="left:2311px;top:572px;width:147px;height:1px;background:#8a96aa;"></div><div class="abs" style="left:2311px;top:588px;width:147px;height:1px;background:#1b2539;"></div><div class="abs" style="left:2311px;top:589px;width:147px;height:1px;background:#8a96aa;"></div><div class="abs" style="left:2311px;top:605px;width:147px;height:1px;background:#1b2539;"></div><div class="abs" style="left:2311px;top:606px;width:147px;height:1px;background:#8a96aa;"></div><div class="abs" style="left:2311px;top:622px;width:147px;height:1px;background:#1b2539;"></div><div class="abs" style="left:2311px;top:623px;width:147px;height:1px;background:#8a96aa;"></div><div class="abs" style="left:2311px;top:639px;width:147px;height:1px;background:#1b2539;"></div><div class="abs" style="left:2311px;top:640px;width:147px;height:1px;background:#8a96aa;"></div><div class="abs" style="left:2311px;top:656px;width:147px;height:1px;background:#1b2539;"></div><div class="abs" style="left:2311px;top:657px;width:147px;height:1px;background:#8a96aa;"></div><div class="abs" style="left:2311px;top:673px;width:147px;height:1px;background:#1b2539;"></div><div class="abs" style="left:2311px;top:674px;width:147px;height:1px;background:#8a96aa;"></div><div class="abs" style="left:2311px;top:690px;width:147px;height:1px;background:#1b2539;"></div><div class="abs" style="left:2311px;top:691px;width:147px;height:1px;background:#8a96aa;"></div><div class="abs" style="left:2311px;top:707px;width:147px;height:1px;background:#1b2539;"></div><div class="abs" style="left:2311px;top:708px;width:147px;height:1px;background:#8a96aa;"></div><div class="abs" style="left:2311px;top:724px;width:147px;height:1px;background:#1b2539;"></div><div class="abs" style="left:2311px;top:725px;width:147px;height:1px;background:#8a96aa;"></div><div class="abs" style="left:2311px;top:741px;width:147px;height:1px;background:#1b2539;"></div><div class="abs" style="left:2311px;top:742px;width:147px;height:1px;background:#8a96aa;"></div><div class="abs" style="left:2311px;top:758px;width:147px;height:1px;background:#1b2539;"></div><div class="abs" style="left:2311px;top:759px;width:147px;height:1px;background:#8a96aa;"></div><div class="abs" style="left:2311px;top:775px;width:147px;height:1px;background:#1b2539;"></div><div class="abs" style="left:2311px;top:776px;width:147px;height:1px;background:#8a96aa;"></div><div class="abs" style="left:2311px;top:792px;width:147px;height:1px;background:#1b2539;"></div><div class="abs" style="left:2311px;top:793px;width:147px;height:1px;background:#8a96aa;"></div><div class="abs" style="left:2311px;top:809px;width:147px;height:1px;background:#1b2539;"></div><div class="abs" style="left:2311px;top:810px;width:147px;height:1px;background:#8a96aa;"></div><div class="abs" style="left:2311px;top:826px;width:147px;height:1px;background:#1b2539;"></div><div class="abs" style="left:2311px;top:827px;width:147px;height:1px;background:#8a96aa;"></div><div class="abs" style="left:2311px;top:843px;width:147px;height:1px;background:#1b2539;"></div><div class="abs" style="left:2311px;top:844px;width:147px;height:1px;background:#8a96aa;"></div><div class="abs" style="left:2311px;top:860px;width:147px;height:1px;background:#1b2539;"></div><div class="abs" style="left:2311px;top:861px;width:147px;height:1px;background:#8a96aa;"></div><div class="abs" style="left:2311px;top:877px;width:147px;height:1px;background:#1b2539;"></div><div class="abs" style="left:2311px;top:878px;width:147px;height:1px;background:#8a96aa;"></div><div class="abs" style="left:2311px;top:894px;width:147px;height:1px;background:#1b2539;"></div><div class="abs" style="left:2311px;top:895px;width:147px;height:1px;background:#8a96aa;"></div><div class="abs" style="left:2311px;top:911px;width:147px;height:1px;background:#1b2539;"></div><div class="abs" style="left:2311px;top:912px;width:147px;height:1px;background:#8a96aa;"></div><div class="abs" style="left:2311px;top:928px;width:147px;height:1px;background:#1b2539;"></div><div class="abs" style="left:2311px;top:929px;width:147px;height:1px;background:#8a96aa;"></div><div class="abs" style="left:2311px;top:945px;width:147px;height:1px;background:#1b2539;"></div><div class="abs" style="left:2311px;top:946px;width:147px;height:1px;background:#8a96aa;"></div><div class="abs" style="left:2311px;top:962px;width:147px;height:1px;background:#1b2539;"></div><div class="abs" style="left:2311px;top:963px;width:147px;height:1px;background:#8a96aa;"></div><div class="abs" style="left:2311px;top:979px;width:147px;height:1px;background:#1b2539;"></div><div class="abs" style="left:2311px;top:980px;width:147px;height:1px;background:#8a96aa;"></div><div class="abs" style="left:2311px;top:996px;width:147px;height:1px;background:#1b2539;"></div><div class="abs" style="left:2311px;top:997px;width:147px;height:1px;background:#8a96aa;"></div><div class="abs" style="left:2311px;top:1013px;width:147px;height:1px;background:#1b2539;"></div><div class="abs" style="left:2311px;top:1014px;width:147px;height:1px;background:#8a96aa;"></div><div class="t tr" style="left:2346.0px;top:83.3px;color:#0d1320">David 3</div><div class="t tr" style="left:2346.0px;top:100.3px;color:#0d1320">Dawn</div><div class="t tr" style="left:2346.0px;top:117.3px;color:#0d1320">DAZ's The Freak 4</div><div class="t tr" style="left:2346.0px;top:134.3px;color:#0d1320">Furrette2</div><div class="t tr" style="left:2346.0px;top:151.3px;color:#0d1320">Generation 4</div><div class="t tr" style="left:2346.0px;top:168.3px;color:#0d1320">Genesis</div><div class="t tr" style="left:2346.0px;top:185.3px;color:#0d1320">Genesis 2</div><div class="t tr" style="left:2346.0px;top:202.3px;color:#0d1320">Genesis 2 Female</div><div class="t tr" style="left:2346.0px;top:219.3px;color:#0d1320">Genesis 2 Male</div><div class="t tr" style="left:2346.0px;top:236.3px;color:#0d1320">Genesis 3</div><div class="t tr" style="left:2346.0px;top:253.3px;color:#0d1320">Genesis 3 Carrara</div><div class="t tr" style="left:2346.0px;top:270.3px;color:#0d1320">Genesis 3 Female</div><div class="t tr" style="left:2356.0px;top:287.3px;color:#0d1320">Accessories</div><div class="t tr" style="left:2356.0px;top:304.3px;color:#0d1320">Anatomy</div><div class="t tr" style="left:2356.0px;top:321.3px;color:#0d1320">Character</div><div class="t tr" style="left:2366.0px;top:338.3px;color:#0d1320">System 46</div><div class="t tr" style="left:2356.0px;top:355.3px;color:#0d1320">Characters</div><div class="t tr" style="left:2356.0px;top:372.3px;color:#0d1320">Clothing</div><div class="t tr" style="left:2366.0px;top:389.3px;color:#0d1320">!A3_Conversions</div><div class="t tr" style="left:2366.0px;top:406.3px;color:#0d1320">Abigail Outfit</div><div class="t tr" style="left:2366.0px;top:423.3px;color:#0d1320">Aeon Soul</div><div class="t tr" style="left:2376.0px;top:440.3px;color:#e4da62">AlphaKini</div><div class="t tr" style="left:2366.0px;top:457.3px;color:#0d1320">Aerial Dancer</div><div class="t tr" style="left:2366.0px;top:474.3px;color:#0d1320">Aeron Pict Warrior</div><div class="t tr" style="left:2366.0px;top:491.3px;color:#0d1320">Ailmer</div><div class="t tr" style="left:2366.0px;top:508.3px;color:#0d1320">Alicia Armor Outfit</div><div class="t tr" style="left:2366.0px;top:525.3px;color:#0d1320">Alliance Outfit</div><div class="t tr" style="left:2366.0px;top:542.3px;color:#0d1320">amy_aimei</div><div class="t tr" style="left:2366.0px;top:559.3px;color:#0d1320">Antonia Clothing</div><div class="t tr" style="left:2366.0px;top:576.3px;color:#0d1320">Arki</div><div class="t tr" style="left:2366.0px;top:593.3px;color:#0d1320">Army Uniform</div><div class="t tr" style="left:2366.0px;top:610.3px;color:#0d1320">Artemis Moon</div><div class="t tr" style="left:2366.0px;top:627.3px;color:#0d1320">Astra Outfit for Genesis</div><div class="t tr" style="left:2366.0px;top:644.3px;color:#0d1320">Athletic Gear</div><div class="t tr" style="left:2366.0px;top:661.3px;color:#0d1320">Austrani</div><div class="t tr" style="left:2366.0px;top:678.3px;color:#0d1320">Autumn Chic</div><div class="t tr" style="left:2366.0px;top:695.3px;color:#0d1320">Badlands Roamer</div><div class="t tr" style="left:2366.0px;top:712.3px;color:#0d1320">Basic Pumps for Genesis</div><div class="t tr" style="left:2366.0px;top:729.3px;color:#0d1320">Basic Wear</div><div class="t tr" style="left:2366.0px;top:746.3px;color:#0d1320">Bast</div><div class="t tr" style="left:2366.0px;top:763.3px;color:#0d1320">Belle Dress</div><div class="t tr" style="left:2366.0px;top:780.3px;color:#0d1320">Bio Suit</div><div class="t tr" style="left:2366.0px;top:797.3px;color:#0d1320">Blood Red</div><div class="t tr" style="left:2366.0px;top:814.3px;color:#0d1320">Boho</div><div class="t tr" style="left:2366.0px;top:831.3px;color:#0d1320">Breena</div><div class="t tr" style="left:2366.0px;top:848.3px;color:#0d1320">Business Suit</div><div class="t tr" style="left:2366.0px;top:865.3px;color:#0d1320">Caged Belle Outfit</div><div class="t tr" style="left:2366.0px;top:882.3px;color:#0d1320">Cardio Gear</div><div class="t tr" style="left:2366.0px;top:899.3px;color:#0d1320">Casual Style Female</div><div class="t tr" style="left:2366.0px;top:916.3px;color:#0d1320">Casual Summer</div><div class="t tr" style="left:2366.0px;top:933.3px;color:#0d1320">Champion Outfit</div><div class="t tr" style="left:2366.0px;top:950.3px;color:#0d1320">Chevaleresse</div><div class="t tr" style="left:2366.0px;top:967.3px;color:#0d1320">Childe of Fyre</div><div class="t tr" style="left:2366.0px;top:984.3px;color:#0d1320">City Dweller</div><div class="t tr" style="left:2366.0px;top:1001.3px;color:#0d1320">Classic</div><svg class="abs" style="left:0;top:0" width="2637" height="1039"><path d="M2316.5 80V1010M2326.5 80V1010" stroke="#cdd7e6" stroke-width="1" fill="none"/><path d="M2336.5 278.5V1010M2346.5 380.5V1010" stroke="#cdd7e6" stroke-width="1" fill="none"/><path d="M2326.5 87.5H2330.5" stroke="#cdd7e6" stroke-width="1" fill="none"/><path d="M2334.0 82.7v9.6l5.6-4.8z" fill="#fff"/><path d="M2326.5 104.5H2330.5" stroke="#cdd7e6" stroke-width="1" fill="none"/><path d="M2334.0 99.7v9.6l5.6-4.8z" fill="#fff"/><path d="M2326.5 121.5H2330.5" stroke="#cdd7e6" stroke-width="1" fill="none"/><path d="M2334.0 116.7v9.6l5.6-4.8z" fill="#fff"/><path d="M2326.5 138.5H2330.5" stroke="#cdd7e6" stroke-width="1" fill="none"/><path d="M2334.0 133.7v9.6l5.6-4.8z" fill="#fff"/><path d="M2326.5 155.5H2330.5" stroke="#cdd7e6" stroke-width="1" fill="none"/><path d="M2334.0 150.7v9.6l5.6-4.8z" fill="#fff"/><path d="M2326.5 172.5H2330.5" stroke="#cdd7e6" stroke-width="1" fill="none"/><path d="M2334.0 167.7v9.6l5.6-4.8z" fill="#fff"/><path d="M2326.5 189.5H2330.5" stroke="#cdd7e6" stroke-width="1" fill="none"/><path d="M2334.0 184.7v9.6l5.6-4.8z" fill="#fff"/><path d="M2326.5 206.5H2330.5" stroke="#cdd7e6" stroke-width="1" fill="none"/><path d="M2334.0 201.7v9.6l5.6-4.8z" fill="#fff"/><path d="M2326.5 223.5H2330.5" stroke="#cdd7e6" stroke-width="1" fill="none"/><path d="M2334.0 218.7v9.6l5.6-4.8z" fill="#fff"/><path d="M2326.5 240.5H2330.5" stroke="#cdd7e6" stroke-width="1" fill="none"/><path d="M2334.0 235.7v9.6l5.6-4.8z" fill="#fff"/><path d="M2326.5 257.5H2330.5" stroke="#cdd7e6" stroke-width="1" fill="none"/><path d="M2334.0 252.7v9.6l5.6-4.8z" fill="#fff"/><path d="M2326.5 274.5H2330.5" stroke="#cdd7e6" stroke-width="1" fill="none"/><path d="M2332.0 272.0h9.4l-4.7 5.2z" fill="#fff"/><path d="M2336.5 291.5H2340.5" stroke="#cdd7e6" stroke-width="1" fill="none"/><path d="M2344.0 286.7v9.6l5.6-4.8z" fill="#fff"/><path d="M2336.5 308.5H2340.5" stroke="#cdd7e6" stroke-width="1" fill="none"/><path d="M2344.0 303.7v9.6l5.6-4.8z" fill="#fff"/><path d="M2336.5 325.5H2340.5" stroke="#cdd7e6" stroke-width="1" fill="none"/><path d="M2342.0 323.0h9.4l-4.7 5.2z" fill="#fff"/><path d="M2346.5 330.5V342.5H2350.5" stroke="#cdd7e6" stroke-width="1" fill="none"/><path d="M2354.0 337.7v9.6l5.6-4.8z" fill="#fff"/><path d="M2336.5 359.5H2340.5" stroke="#cdd7e6" stroke-width="1" fill="none"/><path d="M2344.0 354.7v9.6l5.6-4.8z" fill="#fff"/><path d="M2336.5 376.5H2340.5" stroke="#cdd7e6" stroke-width="1" fill="none"/><path d="M2342.0 374.0h9.4l-4.7 5.2z" fill="#fff"/><path d="M2346.5 393.5H2350.5" stroke="#cdd7e6" stroke-width="1" fill="none"/><path d="M2346.5 410.5H2350.5" stroke="#cdd7e6" stroke-width="1" fill="none"/><path d="M2354.0 405.7v9.6l5.6-4.8z" fill="#fff"/><path d="M2346.5 427.5H2350.5" stroke="#cdd7e6" stroke-width="1" fill="none"/><path d="M2352.0 425.0h9.4l-4.7 5.2z" fill="#fff"/><path d="M2356.5 432.5V444.5H2360.5" stroke="#cdd7e6" stroke-width="1" fill="none"/><path d="M2364.0 439.7v9.6l5.6-4.8z" fill="#fff"/><path d="M2346.5 461.5H2350.5" stroke="#cdd7e6" stroke-width="1" fill="none"/><path d="M2354.0 456.7v9.6l5.6-4.8z" fill="#fff"/><path d="M2346.5 478.5H2350.5" stroke="#cdd7e6" stroke-width="1" fill="none"/><path d="M2354.0 473.7v9.6l5.6-4.8z" fill="#fff"/><path d="M2346.5 495.5H2350.5" stroke="#cdd7e6" stroke-width="1" fill="none"/><path d="M2354.0 490.7v9.6l5.6-4.8z" fill="#fff"/><path d="M2346.5 512.5H2350.5" stroke="#cdd7e6" stroke-width="1" fill="none"/><path d="M2354.0 507.7v9.6l5.6-4.8z" fill="#fff"/><path d="M2346.5 529.5H2350.5" stroke="#cdd7e6" stroke-width="1" fill="none"/><path d="M2354.0 524.7v9.6l5.6-4.8z" fill="#fff"/><path d="M2346.5 546.5H2350.5" stroke="#cdd7e6" stroke-width="1" fill="none"/><path d="M2354.0 541.7v9.6l5.6-4.8z" fill="#fff"/><path d="M2346.5 563.5H2350.5" stroke="#cdd7e6" stroke-width="1" fill="none"/><path d="M2354.0 558.7v9.6l5.6-4.8z" fill="#fff"/><path d="M2346.5 580.5H2350.5" stroke="#cdd7e6" stroke-width="1" fill="none"/><path d="M2354.0 575.7v9.6l5.6-4.8z" fill="#fff"/><path d="M2346.5 597.5H2350.5" stroke="#cdd7e6" stroke-width="1" fill="none"/><path d="M2354.0 592.7v9.6l5.6-4.8z" fill="#fff"/><path d="M2346.5 614.5H2350.5" stroke="#cdd7e6" stroke-width="1" fill="none"/><path d="M2354.0 609.7v9.6l5.6-4.8z" fill="#fff"/><path d="M2346.5 631.5H2350.5" stroke="#cdd7e6" stroke-width="1" fill="none"/><path d="M2354.0 626.7v9.6l5.6-4.8z" fill="#fff"/><path d="M2346.5 648.5H2350.5" stroke="#cdd7e6" stroke-width="1" fill="none"/><path d="M2354.0 643.7v9.6l5.6-4.8z" fill="#fff"/><path d="M2346.5 665.5H2350.5" stroke="#cdd7e6" stroke-width="1" fill="none"/><path d="M2354.0 660.7v9.6l5.6-4.8z" fill="#fff"/><path d="M2346.5 682.5H2350.5" stroke="#cdd7e6" stroke-width="1" fill="none"/><path d="M2354.0 677.7v9.6l5.6-4.8z" fill="#fff"/><path d="M2346.5 699.5H2350.5" stroke="#cdd7e6" stroke-width="1" fill="none"/><path d="M2354.0 694.7v9.6l5.6-4.8z" fill="#fff"/><path d="M2346.5 716.5H2350.5" stroke="#cdd7e6" stroke-width="1" fill="none"/><path d="M2346.5 733.5H2350.5" stroke="#cdd7e6" stroke-width="1" fill="none"/><path d="M2354.0 728.7v9.6l5.6-4.8z" fill="#fff"/><path d="M2346.5 750.5H2350.5" stroke="#cdd7e6" stroke-width="1" fill="none"/><path d="M2354.0 745.7v9.6l5.6-4.8z" fill="#fff"/><path d="M2346.5 767.5H2350.5" stroke="#cdd7e6" stroke-width="1" fill="none"/><path d="M2354.0 762.7v9.6l5.6-4.8z" fill="#fff"/><path d="M2346.5 784.5H2350.5" stroke="#cdd7e6" stroke-width="1" fill="none"/><path d="M2354.0 779.7v9.6l5.6-4.8z" fill="#fff"/><path d="M2346.5 801.5H2350.5" stroke="#cdd7e6" stroke-width="1" fill="none"/><path d="M2354.0 796.7v9.6l5.6-4.8z" fill="#fff"/><path d="M2346.5 818.5H2350.5" stroke="#cdd7e6" stroke-width="1" fill="none"/><path d="M2354.0 813.7v9.6l5.6-4.8z" fill="#fff"/><path d="M2346.5 835.5H2350.5" stroke="#cdd7e6" stroke-width="1" fill="none"/><path d="M2354.0 830.7v9.6l5.6-4.8z" fill="#fff"/><path d="M2346.5 852.5H2350.5" stroke="#cdd7e6" stroke-width="1" fill="none"/><path d="M2354.0 847.7v9.6l5.6-4.8z" fill="#fff"/><path d="M2346.5 869.5H2350.5" stroke="#cdd7e6" stroke-width="1" fill="none"/><path d="M2354.0 864.7v9.6l5.6-4.8z" fill="#fff"/><path d="M2346.5 886.5H2350.5" stroke="#cdd7e6" stroke-width="1" fill="none"/><path d="M2354.0 881.7v9.6l5.6-4.8z" fill="#fff"/><path d="M2346.5 903.5H2350.5" stroke="#cdd7e6" stroke-width="1" fill="none"/><path d="M2354.0 898.7v9.6l5.6-4.8z" fill="#fff"/><path d="M2346.5 920.5H2350.5" stroke="#cdd7e6" stroke-width="1" fill="none"/><path d="M2354.0 915.7v9.6l5.6-4.8z" fill="#fff"/><path d="M2346.5 937.5H2350.5" stroke="#cdd7e6" stroke-width="1" fill="none"/><path d="M2354.0 932.7v9.6l5.6-4.8z" fill="#fff"/><path d="M2346.5 954.5H2350.5" stroke="#cdd7e6" stroke-width="1" fill="none"/><path d="M2354.0 949.7v9.6l5.6-4.8z" fill="#fff"/><path d="M2346.5 971.5H2350.5" stroke="#cdd7e6" stroke-width="1" fill="none"/><path d="M2354.0 966.7v9.6l5.6-4.8z" fill="#fff"/><path d="M2346.5 988.5H2350.5" stroke="#cdd7e6" stroke-width="1" fill="none"/><path d="M2354.0 983.7v9.6l5.6-4.8z" fill="#fff"/><path d="M2346.5 1005.5H2350.5" stroke="#cdd7e6" stroke-width="1" fill="none"/><path d="M2354.0 1000.7v9.6l5.6-4.8z" fill="#fff"/></svg></div><div class="abs" style="left:2307px;top:436px;width:4px;height:17px;background:#e4da62;"></div><div class="abs" style="left:2458px;top:86px;width:4px;height:922px;background:linear-gradient(90deg,#4a4f58,#fff 40%,#fff 60%,#6a6f78);"></div><div class="abs" style="left:2457px;top:86px;width:6px;height:9px;background:#e3d94a;border:1px solid #5a5410"></div><div class="abs" style="left:2457px;top:999px;width:6px;height:10px;background:#e3d94a;border:1px solid #5a5410"></div><div class="abs" style="left:2307px;top:1009px;width:156px;height:5px;background:linear-gradient(#4a4f58,#fff 40%,#fff 60%,#6a6f78);"></div><div class="abs" style="left:2307px;top:1009px;width:12px;height:5px;background:#e3d94a;border:1px solid #5a5410"></div><div class="abs" style="left:2447px;top:1009px;width:12px;height:5px;background:#e3d94a;border:1px solid #5a5410"></div><svg class="abs" style="left:2470.2px;top:86.2px" width="47.2" height="45.8" viewBox="0 0 45 45" preserveAspectRatio="none"><defs><radialGradient id="tga" cx="40%" cy="55%" r="65%"><stop offset="0" stop-color="#a9abd2"/><stop offset=".45" stop-color="#5c5e8a"/><stop offset="1" stop-color="#1f2034"/></radialGradient><linearGradient id="tla" x1="0" y1="0" x2="1" y2="1"><stop offset="0" stop-color="#8789b8"/><stop offset="1" stop-color="#2c2d48"/></linearGradient></defs><rect width="45" height="45" fill="#c8c6c0"/><path d="M0 36Q20 36 45 24V45H0Z" fill="#d3d1cb"/><path d="M6.0 0L-3.0 30" stroke="#f4f4f2" stroke-width="1.2"/><path d="M8.6 0L-0.3999999999999999 30" stroke="#f4f4f2" stroke-width="1.2"/><path d="M11.2 0L2.2 30" stroke="#f4f4f2" stroke-width="1.2"/><path d="M13.8 0L4.800000000000001 30" stroke="#f4f4f2" stroke-width="1.2"/><path d="M16.4 0L7.4 30" stroke="#f4f4f2" stroke-width="1.2"/><circle cx="2.0" cy="35.5" r="1.3" fill="#e6e4de"/><circle cx="3.8" cy="38.9" r="1.3" fill="#e6e4de"/><circle cx="2.0" cy="42.3" r="1.3" fill="#e6e4de"/><circle cx="5.6" cy="35.5" r="1.3" fill="#e6e4de"/><circle cx="7.3999999999999995" cy="38.9" r="1.3" fill="#e6e4de"/><circle cx="5.6" cy="42.3" r="1.3" fill="#e6e4de"/><circle cx="9.2" cy="35.5" r="1.3" fill="#e6e4de"/><circle cx="11.0" cy="38.9" r="1.3" fill="#e6e4de"/><circle cx="9.2" cy="42.3" r="1.3" fill="#e6e4de"/><circle cx="12.8" cy="35.5" r="1.3" fill="#e6e4de"/><circle cx="14.600000000000001" cy="38.9" r="1.3" fill="#e6e4de"/><circle cx="12.8" cy="42.3" r="1.3" fill="#e6e4de"/><circle cx="16.4" cy="35.5" r="1.3" fill="#e6e4de"/><circle cx="18.2" cy="38.9" r="1.3" fill="#e6e4de"/><circle cx="16.4" cy="42.3" r="1.3" fill="#e6e4de"/><circle cx="20.0" cy="35.5" r="1.3" fill="#e6e4de"/><circle cx="21.8" cy="38.9" r="1.3" fill="#e6e4de"/><circle cx="20.0" cy="42.3" r="1.3" fill="#e6e4de"/><circle cx="23.6" cy="35.5" r="1.3" fill="#e6e4de"/><circle cx="25.400000000000002" cy="38.9" r="1.3" fill="#e6e4de"/><circle cx="23.6" cy="42.3" r="1.3" fill="#e6e4de"/><circle cx="27.2" cy="35.5" r="1.3" fill="#e6e4de"/><circle cx="29.0" cy="38.9" r="1.3" fill="#e6e4de"/><circle cx="27.2" cy="42.3" r="1.3" fill="#e6e4de"/><circle cx="30.8" cy="35.5" r="1.3" fill="#e6e4de"/><circle cx="32.6" cy="38.9" r="1.3" fill="#e6e4de"/><circle cx="30.8" cy="42.3" r="1.3" fill="#e6e4de"/><circle cx="34.4" cy="35.5" r="1.3" fill="#e6e4de"/><circle cx="36.199999999999996" cy="38.9" r="1.3" fill="#e6e4de"/><circle cx="34.4" cy="42.3" r="1.3" fill="#e6e4de"/><circle cx="38.0" cy="35.5" r="1.3" fill="#e6e4de"/><circle cx="39.8" cy="38.9" r="1.3" fill="#e6e4de"/><circle cx="38.0" cy="42.3" r="1.3" fill="#e6e4de"/><circle cx="41.6" cy="35.5" r="1.3" fill="#e6e4de"/><circle cx="43.4" cy="38.9" r="1.3" fill="#e6e4de"/><circle cx="41.6" cy="42.3" r="1.3" fill="#e6e4de"/><circle cx="45.2" cy="35.5" r="1.3" fill="#e6e4de"/><circle cx="47.0" cy="38.9" r="1.3" fill="#e6e4de"/><circle cx="45.2" cy="42.3" r="1.3" fill="#e6e4de"/><path d="M13 2C11 12 12 18 14 22M13 2C22 0 27 4 31 14C33 19 35 22 37 24" fill="none" stroke="url(#tla)" stroke-width="2.2"/><path d="M7 22C9 15 16 14 21 19C24 22 25 27 24 30C18 33 9 31 7 22Z" fill="url(#tga)"/><path d="M25 24C28 18 35 17 37 22C38 27 34 31 28 31C26 29 25 27 25 24Z" fill="url(#tga)"/><path d="M13 20L36 30M36 21L14 31M22 26H34" stroke="#4a4c78" stroke-width="1.6" fill="none"/><path d="M6 33C12 37 24 37 37 31L36 35C30 37 26 40 23 44C19 40 12 38 6 33Z" fill="url(#tla)"/><path d="M26 34L35 31L33 34Z" fill="#e8e6e0"/><rect x="1.3" y="1.3" width="42.4" height="42.4" fill="none" stroke="#e4da62" stroke-width="2.6"/></svg><svg class="abs" style="left:2520.2px;top:86.2px" width="44.8" height="44.5" viewBox="0 0 45 45" preserveAspectRatio="none"><defs><radialGradient id="tgb" cx="40%" cy="55%" r="65%"><stop offset="0" stop-color="#a9abd2"/><stop offset=".45" stop-color="#5c5e8a"/><stop offset="1" stop-color="#1f2034"/></radialGradient><linearGradient id="tlb" x1="0" y1="0" x2="1" y2="1"><stop offset="0" stop-color="#8789b8"/><stop offset="1" stop-color="#2c2d48"/></linearGradient></defs><rect width="45" height="45" fill="#c8c6c0"/><path d="M0 36Q20 36 45 24V45H0Z" fill="#d3d1cb"/><path d="M6.0 0L-3.0 30" stroke="#f4f4f2" stroke-width="1.2"/><path d="M8.6 0L-0.3999999999999999 30" stroke="#f4f4f2" stroke-width="1.2"/><path d="M11.2 0L2.2 30" stroke="#f4f4f2" stroke-width="1.2"/><path d="M13.8 0L4.800000000000001 30" stroke="#f4f4f2" stroke-width="1.2"/><path d="M16.4 0L7.4 30" stroke="#f4f4f2" stroke-width="1.2"/><circle cx="2.0" cy="35.5" r="1.3" fill="#e6e4de"/><circle cx="3.8" cy="38.9" r="1.3" fill="#e6e4de"/><circle cx="2.0" cy="42.3" r="1.3" fill="#e6e4de"/><circle cx="5.6" cy="35.5" r="1.3" fill="#e6e4de"/><circle cx="7.3999999999999995" cy="38.9" r="1.3" fill="#e6e4de"/><circle cx="5.6" cy="42.3" r="1.3" fill="#e6e4de"/><circle cx="9.2" cy="35.5" r="1.3" fill="#e6e4de"/><circle cx="11.0" cy="38.9" r="1.3" fill="#e6e4de"/><circle cx="9.2" cy="42.3" r="1.3" fill="#e6e4de"/><circle cx="12.8" cy="35.5" r="1.3" fill="#e6e4de"/><circle cx="14.600000000000001" cy="38.9" r="1.3" fill="#e6e4de"/><circle cx="12.8" cy="42.3" r="1.3" fill="#e6e4de"/><circle cx="16.4" cy="35.5" r="1.3" fill="#e6e4de"/><circle cx="18.2" cy="38.9" r="1.3" fill="#e6e4de"/><circle cx="16.4" cy="42.3" r="1.3" fill="#e6e4de"/><circle cx="20.0" cy="35.5" r="1.3" fill="#e6e4de"/><circle cx="21.8" cy="38.9" r="1.3" fill="#e6e4de"/><circle cx="20.0" cy="42.3" r="1.3" fill="#e6e4de"/><circle cx="23.6" cy="35.5" r="1.3" fill="#e6e4de"/><circle cx="25.400000000000002" cy="38.9" r="1.3" fill="#e6e4de"/><circle cx="23.6" cy="42.3" r="1.3" fill="#e6e4de"/><circle cx="27.2" cy="35.5" r="1.3" fill="#e6e4de"/><circle cx="29.0" cy="38.9" r="1.3" fill="#e6e4de"/><circle cx="27.2" cy="42.3" r="1.3" fill="#e6e4de"/><circle cx="30.8" cy="35.5" r="1.3" fill="#e6e4de"/><circle cx="32.6" cy="38.9" r="1.3" fill="#e6e4de"/><circle cx="30.8" cy="42.3" r="1.3" fill="#e6e4de"/><circle cx="34.4" cy="35.5" r="1.3" fill="#e6e4de"/><circle cx="36.199999999999996" cy="38.9" r="1.3" fill="#e6e4de"/><circle cx="34.4" cy="42.3" r="1.3" fill="#e6e4de"/><circle cx="38.0" cy="35.5" r="1.3" fill="#e6e4de"/><circle cx="39.8" cy="38.9" r="1.3" fill="#e6e4de"/><circle cx="38.0" cy="42.3" r="1.3" fill="#e6e4de"/><circle cx="41.6" cy="35.5" r="1.3" fill="#e6e4de"/><circle cx="43.4" cy="38.9" r="1.3" fill="#e6e4de"/><circle cx="41.6" cy="42.3" r="1.3" fill="#e6e4de"/><circle cx="45.2" cy="35.5" r="1.3" fill="#e6e4de"/><circle cx="47.0" cy="38.9" r="1.3" fill="#e6e4de"/><circle cx="45.2" cy="42.3" r="1.3" fill="#e6e4de"/><path d="M10 4C9 14 10 22 14 30M10 4C16 1 24 1 28 5C33 11 38 20 41 27" fill="none" stroke="url(#tlb)" stroke-width="2.6"/><path d="M2 27C6 20 14 20 19 26C23 30 25 35 25 39C16 43 5 40 2 27Z" fill="url(#tgb)"/><path d="M25 37C25 30 30 24 36 24C42 25 43 32 40 38C35 41 28 41 25 37Z" fill="url(#tgb)"/><path d="M9 22L33 41M41 27L24 38M18 27H38" stroke="#7476a8" stroke-width="2" fill="none"/><path d="M8 23L9 30" stroke="#b4b6dc" stroke-width="1.6"/><rect x="0.6" y="0.6" width="43.8" height="43.8" fill="none" stroke="#3a1d08" stroke-width="1.2"/></svg><svg class="abs" style="left:2569.1px;top:86.2px" width="44.9" height="44.5" viewBox="0 0 45 45" preserveAspectRatio="none"><defs><radialGradient id="tgc" cx="40%" cy="55%" r="65%"><stop offset="0" stop-color="#a9abd2"/><stop offset=".45" stop-color="#5c5e8a"/><stop offset="1" stop-color="#1f2034"/></radialGradient><linearGradient id="tlc" x1="0" y1="0" x2="1" y2="1"><stop offset="0" stop-color="#8789b8"/><stop offset="1" stop-color="#2c2d48"/></linearGradient></defs><rect width="45" height="45" fill="#c8c6c0"/><path d="M0 36Q20 36 45 24V45H0Z" fill="#d3d1cb"/><path d="M6.0 0L-3.0 30" stroke="#f4f4f2" stroke-width="1.2"/><path d="M8.6 0L-0.3999999999999999 30" stroke="#f4f4f2" stroke-width="1.2"/><path d="M11.2 0L2.2 30" stroke="#f4f4f2" stroke-width="1.2"/><path d="M13.8 0L4.800000000000001 30" stroke="#f4f4f2" stroke-width="1.2"/><path d="M16.4 0L7.4 30" stroke="#f4f4f2" stroke-width="1.2"/><circle cx="2.0" cy="35.5" r="1.3" fill="#e6e4de"/><circle cx="3.8" cy="38.9" r="1.3" fill="#e6e4de"/><circle cx="2.0" cy="42.3" r="1.3" fill="#e6e4de"/><circle cx="5.6" cy="35.5" r="1.3" fill="#e6e4de"/><circle cx="7.3999999999999995" cy="38.9" r="1.3" fill="#e6e4de"/><circle cx="5.6" cy="42.3" r="1.3" fill="#e6e4de"/><circle cx="9.2" cy="35.5" r="1.3" fill="#e6e4de"/><circle cx="11.0" cy="38.9" r="1.3" fill="#e6e4de"/><circle cx="9.2" cy="42.3" r="1.3" fill="#e6e4de"/><circle cx="12.8" cy="35.5" r="1.3" fill="#e6e4de"/><circle cx="14.600000000000001" cy="38.9" r="1.3" fill="#e6e4de"/><circle cx="12.8" cy="42.3" r="1.3" fill="#e6e4de"/><circle cx="16.4" cy="35.5" r="1.3" fill="#e6e4de"/><circle cx="18.2" cy="38.9" r="1.3" fill="#e6e4de"/><circle cx="16.4" cy="42.3" r="1.3" fill="#e6e4de"/><circle cx="20.0" cy="35.5" r="1.3" fill="#e6e4de"/><circle cx="21.8" cy="38.9" r="1.3" fill="#e6e4de"/><circle cx="20.0" cy="42.3" r="1.3" fill="#e6e4de"/><circle cx="23.6" cy="35.5" r="1.3" fill="#e6e4de"/><circle cx="25.400000000000002" cy="38.9" r="1.3" fill="#e6e4de"/><circle cx="23.6" cy="42.3" r="1.3" fill="#e6e4de"/><circle cx="27.2" cy="35.5" r="1.3" fill="#e6e4de"/><circle cx="29.0" cy="38.9" r="1.3" fill="#e6e4de"/><circle cx="27.2" cy="42.3" r="1.3" fill="#e6e4de"/><circle cx="30.8" cy="35.5" r="1.3" fill="#e6e4de"/><circle cx="32.6" cy="38.9" r="1.3" fill="#e6e4de"/><circle cx="30.8" cy="42.3" r="1.3" fill="#e6e4de"/><circle cx="34.4" cy="35.5" r="1.3" fill="#e6e4de"/><circle cx="36.199999999999996" cy="38.9" r="1.3" fill="#e6e4de"/><circle cx="34.4" cy="42.3" r="1.3" fill="#e6e4de"/><circle cx="38.0" cy="35.5" r="1.3" fill="#e6e4de"/><circle cx="39.8" cy="38.9" r="1.3" fill="#e6e4de"/><circle cx="38.0" cy="42.3" r="1.3" fill="#e6e4de"/><circle cx="41.6" cy="35.5" r="1.3" fill="#e6e4de"/><circle cx="43.4" cy="38.9" r="1.3" fill="#e6e4de"/><circle cx="41.6" cy="42.3" r="1.3" fill="#e6e4de"/><circle cx="45.2" cy="35.5" r="1.3" fill="#e6e4de"/><circle cx="47.0" cy="38.9" r="1.3" fill="#e6e4de"/><circle cx="45.2" cy="42.3" r="1.3" fill="#e6e4de"/><path d="M1 18C12 13 32 13 43 15L44 22C36 25 28 30 25 36C22 37 20 36 19 35C15 28 8 24 1 22Z" fill="url(#tgc)"/><path d="M1 18C12 13 32 13 43 15L44 19C32 16 12 17 1 21Z" fill="#3a3b5c"/><path d="M1 20.5C12 17 32 16.5 44 19.5" stroke="#9a9cc8" stroke-width="1.3" fill="none"/><path d="M6 22L36 24" stroke="#c4c6e4" stroke-width="1" stroke-dasharray="2 1.6"/><rect x="0.6" y="0.6" width="43.8" height="43.8" fill="none" stroke="#3a1d08" stroke-width="1.2"/></svg><div class="t tr" style="left:2470.5px;top:135.8px;color:#e4da62">Alphakini .</div><div class="t tr" style="left:2517.8px;top:135.8px">AlphaKini .</div><div class="t tr" style="left:2567px;top:135.8px">AlphaKini .</div><svg class="abs" style="left:40.5px;top:66.5px" width="10" height="10"><circle cx="5" cy="5" r="2.7" fill="none" stroke="#c3cad6" stroke-width="1.6"/></svg><svg class="abs" style="left:1927.4px;top:6.5px" width="10" height="10"><circle cx="5" cy="5" r="2.7" fill="none" stroke="#c3cad6" stroke-width="1.6"/></svg><svg class="abs" style="left:2270.3px;top:5.6px" width="10" height="10"><circle cx="5" cy="5" r="2.7" fill="none" stroke="#c3cad6" stroke-width="1.6"/></svg></div></body></html>
